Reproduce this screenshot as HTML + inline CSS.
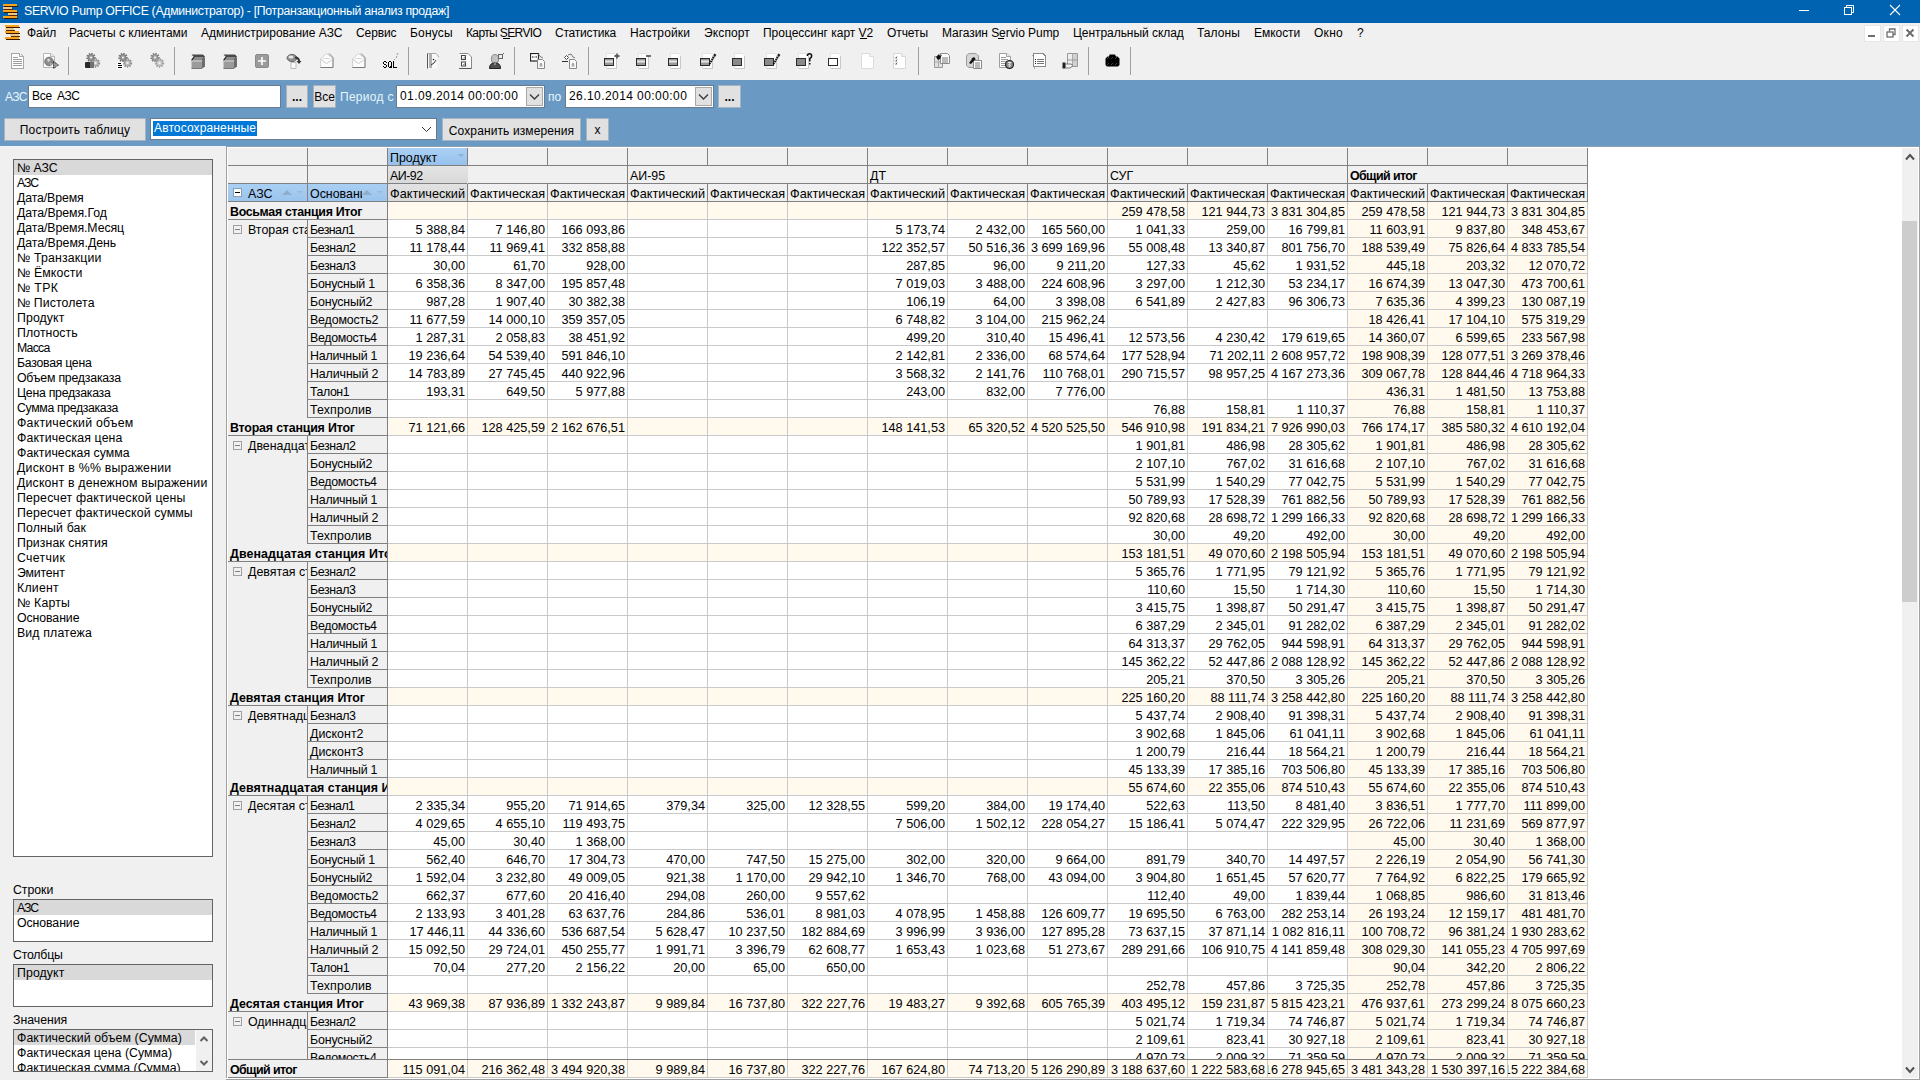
<!DOCTYPE html><html><head><meta charset="utf-8"><style>
*{margin:0;padding:0;box-sizing:border-box}
html,body{width:1920px;height:1080px;overflow:hidden;background:#f0f0f0;font-family:"Liberation Sans",sans-serif;color:#000}
.a{position:absolute}
.t{position:absolute;white-space:nowrap}
#title{left:0;top:0;width:1920px;height:23px;background:#0063b1}
#menu{left:0;top:23px;width:1920px;height:22px;background:#f0f0f0}
.mi{position:absolute;top:26px;font-size:12px;line-height:14px;white-space:nowrap}
#filter{left:0;top:80px;width:1920px;height:66px;background:#6a9ac4}
.btn{position:absolute;background:#e1e1e1;border:1px solid #adadad;font-size:12px;text-align:center;white-space:nowrap;overflow:hidden}
.inp{position:absolute;background:#fff;border:1px solid #7a7a7a;font-size:12px;white-space:nowrap;overflow:hidden}
.sep{position:absolute;top:47px;width:1px;height:28px;background:#a0a0a0}
.c{position:absolute;height:18px;border-right:1px solid #c9c9c9;border-bottom:1px solid #c9c9c9;background:#fff;font-size:12.7px;line-height:17px;padding-top:2px;text-align:right;padding-right:2px;white-space:nowrap;overflow:hidden}
.cr{background:#fff9ee}
.h{position:absolute;height:18px;border-right:1px solid #808080;border-bottom:1px solid #808080;background:#f0f0f0;font-size:12.4px;line-height:17px;padding-top:2px;padding-left:2px;white-space:nowrap;overflow:hidden}
.b{font-weight:bold}
.li{position:absolute;left:17px;font-size:12.3px;line-height:15px;padding-top:1px;white-space:nowrap}
.lb{position:absolute;background:#fff;border:1px solid #646464;overflow:hidden}
.sel{position:absolute;left:1px;right:1px;height:15px;background:#d9d9d9}
</style></head><body>
<div id="title" class="a"></div>
<svg class="a" style="left:3px;top:4px" width="16" height="16" viewBox="0 0 16 16" shape-rendering="crispEdges">
<rect x="1" y="2" width="14" height="1" fill="#3a1800"/><rect x="0" y="0" width="14" height="2" fill="#f8a41a"/>
<rect x="1" y="5" width="9" height="1" fill="#5a2800"/><rect x="0" y="3" width="9" height="2" fill="#e9c690"/>
<rect x="1" y="8" width="14" height="1" fill="#3a1800"/><rect x="0" y="6" width="14" height="2" fill="#f8a41a"/>
<rect x="6" y="11" width="9" height="1" fill="#5a2800"/><rect x="5" y="9" width="9" height="2" fill="#e9c690"/>
<rect x="1" y="14" width="14" height="1" fill="#3a1800"/><rect x="0" y="12" width="14" height="2" fill="#f8a41a"/>
</svg>
<div class="t" style="left:24px;top:4px;font-size:12.3px;line-height:15px;color:#fff;letter-spacing:-0.32px">SERVIO Pump OFFICE (Администратор) - [Потранзакционный анализ продаж]</div>
<div class="a" style="left:1799px;top:10px;width:10px;height:1px;background:#fff"></div>
<svg class="a" style="left:1843px;top:4px" width="12" height="12"><rect x="1.5" y="3.5" width="7" height="7" fill="none" stroke="#fff"/><path d="M3.5 3.5V1.5H10.5V8.5H8.5" fill="none" stroke="#fff"/></svg>
<svg class="a" style="left:1889px;top:4px" width="12" height="12"><path d="M1 1L11 11M11 1L1 11" stroke="#fff" stroke-width="1.1"/></svg>
<div id="menu" class="a"></div>
<svg class="a" style="left:5px;top:25px" width="16" height="16" viewBox="0 0 16 16" shape-rendering="crispEdges">
<rect x="1" y="2" width="14" height="1" fill="#3a1800"/><rect x="0" y="0" width="14" height="2" fill="#f8a41a"/>
<rect x="1" y="5" width="9" height="1" fill="#5a2800"/><rect x="0" y="3" width="9" height="2" fill="#e9c690"/>
<rect x="1" y="8" width="14" height="1" fill="#3a1800"/><rect x="0" y="6" width="14" height="2" fill="#f8a41a"/>
<rect x="6" y="11" width="9" height="1" fill="#5a2800"/><rect x="5" y="9" width="9" height="2" fill="#e9c690"/>
<rect x="1" y="14" width="14" height="1" fill="#3a1800"/><rect x="0" y="12" width="14" height="2" fill="#f8a41a"/>
</svg>
<div class="mi" style="left:27px;letter-spacing:-0.066px">Файл</div>
<div class="mi" style="left:69px;letter-spacing:-0.018px">Расчеты с клиентами</div>
<div class="mi" style="left:201px;letter-spacing:0.004px">Администрирование АЗС</div>
<div class="mi" style="left:356px;letter-spacing:-0.099px">Сервис</div>
<div class="mi" style="left:410px;letter-spacing:0.18px">Бонусы</div>
<div class="mi" style="left:466px;letter-spacing:-0.618px">Карты SERVIO</div>
<div class="mi" style="left:555px;letter-spacing:-0.203px">Статистика</div>
<div class="mi" style="left:630px;letter-spacing:0.128px">Настройки</div>
<div class="mi" style="left:704px;letter-spacing:0.129px">Экспорт</div>
<div class="mi" style="left:763px;letter-spacing:-0.016px">Процессинг карт V2</div>
<div class="mi" style="left:887px;letter-spacing:-0.081px">Отчеты</div>
<div class="mi" style="left:942px;letter-spacing:-0.057px">Магазин Servio Pump</div>
<div class="mi" style="left:1073px;letter-spacing:-0.052px">Центральный склад</div>
<div class="mi" style="left:1197px;letter-spacing:0.078px">Талоны</div>
<div class="mi" style="left:1254px;letter-spacing:-0.038px">Емкости</div>
<div class="mi" style="left:1314px;letter-spacing:0.277px">Окно</div>
<div class="mi" style="left:1357px;letter-spacing:-0.688px">?</div>
<div class="a" style="left:503px;top:38px;width:7px;height:1px;background:#000"></div>
<div class="a" style="left:860px;top:38px;width:7px;height:1px;background:#000"></div>
<div class="a" style="left:998px;top:38px;width:6px;height:1px;background:#000"></div>
<div class="a" style="left:1864px;top:25px;width:17px;height:17px;background:#fff;border:1px solid #e6e6e6"></div>
<div class="a" style="left:1883px;top:25px;width:17px;height:17px;background:#fff;border:1px solid #e6e6e6"></div>
<div class="a" style="left:1902px;top:25px;width:17px;height:17px;background:#fff;border:1px solid #e6e6e6"></div>
<div class="a" style="left:1868px;top:35px;width:7px;height:2px;background:#6d6d6d"></div>
<svg class="a" style="left:1886px;top:28px" width="10" height="10"><rect x="1" y="4" width="6" height="5" fill="none" stroke="#6d6d6d" stroke-width="1.3"/><path d="M3.5 3.5V1H9V6.5H7" fill="none" stroke="#6d6d6d" stroke-width="1.3"/></svg>
<svg class="a" style="left:1905px;top:28px" width="10" height="10"><path d="M1.5 1.5L8.5 8.5M8.5 1.5L1.5 8.5" stroke="#6d6d6d" stroke-width="2"/></svg>
<svg class="a" style="left:11px;top:53px" width="14" height="17" viewBox="0 0 14 17" shape-rendering="crispEdges"><path d="M0.5 0.5H8.5L12.5 3.5V15.5H0.5Z" fill="#fff" stroke="#a8a8a8"/><path d="M8.5 0.5V3.5H12.5" fill="#eee" stroke="#a8a8a8"/><path d="M2 4.5H7M2 6.5H11M2 8.5H11M2 10.5H11M2 12.5H11" stroke="#9c9c9c"/></svg>
<svg class="a" style="left:43px;top:53px" width="17" height="17" viewBox="0 0 17 17"><path d="M0.5 0.5H7.5L11.5 3.5V14.5H0.5Z" fill="#fff" stroke="#b4b4b4"/><path d="M7.5 0.5V3.5H11.5" fill="#eee" stroke="#b4b4b4"/><circle cx="6" cy="8.5" r="4.3" fill="#8a8a8a" stroke="#666" stroke-width="0.8"/><path d="M4 6.2L6.5 5.5L7 7.5L5 9.5Z" fill="#d6d6d6"/><path d="M7.5 10L9 11L7 12Z" fill="#ccc"/><path d="M10.5 8.5L15.5 12L10.5 15.5Z" fill="#9a9a9a" stroke="#111" stroke-width="1" stroke-dasharray="1 0.8"/></svg>
<svg class="a" style="left:84px;top:52px" width="17" height="17" viewBox="0 0 17 17"><circle cx="7" cy="5.5" r="3.6" fill="none" stroke="#6e6e6e" stroke-width="2.2" stroke-dasharray="1.3 1.1"/><circle cx="7" cy="5.5" r="3.0" fill="#9a9a9a" stroke="#6e6e6e" stroke-width="0.8"/><circle cx="7" cy="5.5" r="1" fill="#f4f4f4"/><circle cx="11.5" cy="11" r="3.6" fill="none" stroke="#8c8c8c" stroke-width="2.2" stroke-dasharray="1.3 1.1"/><circle cx="11.5" cy="11" r="3.0" fill="#c4c4c4" stroke="#8c8c8c" stroke-width="0.8"/><circle cx="11.5" cy="11" r="1" fill="#f4f4f4"/><rect x="1" y="10" width="9" height="6" rx="1" fill="#2a2a2a"/><rect x="6" y="10" width="4" height="6" fill="#707070"/></svg>
<svg class="a" style="left:116px;top:52px" width="17" height="17" viewBox="0 0 17 17"><circle cx="7" cy="5.5" r="3.6" fill="none" stroke="#6e6e6e" stroke-width="2.2" stroke-dasharray="1.3 1.1"/><circle cx="7" cy="5.5" r="3.0" fill="#9a9a9a" stroke="#6e6e6e" stroke-width="0.8"/><circle cx="7" cy="5.5" r="1" fill="#f4f4f4"/><circle cx="11.5" cy="11" r="3.6" fill="none" stroke="#8c8c8c" stroke-width="2.2" stroke-dasharray="1.3 1.1"/><circle cx="11.5" cy="11" r="3.0" fill="#c4c4c4" stroke="#8c8c8c" stroke-width="0.8"/><circle cx="11.5" cy="11" r="1" fill="#f4f4f4"/><rect x="1" y="10" width="6" height="7" fill="#fff"/><path d="M2 11.5H5M2 13.5H6M2 15.5H6" stroke="#000" stroke-width="1.2"/></svg>
<svg class="a" style="left:148px;top:52px" width="17" height="17" viewBox="0 0 17 17"><circle cx="7" cy="5.5" r="3.6" fill="none" stroke="#7a7a7a" stroke-width="2.2" stroke-dasharray="1.3 1.1"/><circle cx="7" cy="5.5" r="3.0" fill="#a8a8a8" stroke="#7a7a7a" stroke-width="0.8"/><circle cx="7" cy="5.5" r="1" fill="#f4f4f4"/><circle cx="11.5" cy="11" r="3.6" fill="none" stroke="#9a9a9a" stroke-width="2.2" stroke-dasharray="1.3 1.1"/><circle cx="11.5" cy="11" r="3.0" fill="#d0d0d0" stroke="#9a9a9a" stroke-width="0.8"/><circle cx="11.5" cy="11" r="1" fill="#f4f4f4"/></svg>
<svg class="a" style="left:191px;top:54px" width="14" height="15" viewBox="0 0 14 15"><path d="M0.5 0.5H12L14 2.5L11.5 6.5H0.5L3 3Z" fill="#4a4a4a"/><path d="M3 3H12.5L10.5 6.5H0.8Z" fill="#8c8c8c"/><path d="M3.2 2.8L0.6 6.4" stroke="#1e1e1e" stroke-width="1.1"/><rect x="0.5" y="7" width="10.5" height="7.5" fill="#9a9a9a"/><path d="M11 6.8L14 3V12.8L11 14.5Z" fill="#6c6c6c"/><path d="M0.5 7H11" stroke="#d6d6d6"/><path d="M11 14.5H0.5" stroke="#777"/></svg>
<svg class="a" style="left:223px;top:54px" width="14" height="15" viewBox="0 0 14 15"><path d="M0.5 0.5H12L14 2.5L11.5 6.5H0.5L3 3Z" fill="#4a4a4a"/><path d="M3 3H12.5L10.5 6.5H0.8Z" fill="#8c8c8c"/><path d="M3.2 2.8L0.6 6.4" stroke="#1e1e1e" stroke-width="1.1"/><rect x="0.5" y="7" width="10.5" height="7.5" fill="#9a9a9a"/><path d="M11 6.8L14 3V12.8L11 14.5Z" fill="#6c6c6c"/><path d="M0.5 7H11" stroke="#d6d6d6"/><path d="M11 14.5H0.5" stroke="#777"/></svg>
<svg class="a" style="left:255px;top:54px" width="15" height="15" viewBox="0 0 15 15"><rect x="0.5" y="0.5" width="13" height="13" rx="1.5" fill="#9b9b9b" stroke="#8a8a8a"/><path d="M7 3V11M3 7H11" stroke="#fff" stroke-width="1.6"/></svg>
<svg class="a" style="left:286px;top:53px" width="17" height="17" viewBox="0 0 17 17"><ellipse cx="6" cy="5" rx="5" ry="3.6" fill="#8e8e8e" stroke="#6a6a6a"/><ellipse cx="5" cy="4" rx="2.5" ry="1.6" fill="#e6e6e6"/><path d="M5 9.5H10V15.5H5Z" fill="#fafafa" stroke="#bbb"/><path d="M9 3.5C12 3.5 14 5 14 8L15.5 8L13 11L10.5 8L12 8C12 6.5 11 5.5 9 5.5Z" fill="#333"/></svg>
<svg class="a" style="left:320px;top:53px" width="14" height="16" viewBox="0 0 14 16"><path d="M0.5 14.5V6L6.5 0.5L13 6V14.5Z" fill="#fdfdfd" stroke="#d0d0d0"/><path d="M9 0.5L13 4.5V14.5H0.5" fill="none" stroke="#7a7a7a"/><path d="M0.5 6L6.5 10.5L13 6" fill="none" stroke="#c8c8c8"/><path d="M3 5.5H10" stroke="#d8d8d8"/></svg>
<svg class="a" style="left:352px;top:53px" width="14" height="16" viewBox="0 0 14 16"><path d="M0.5 14.5V6L6.5 0.5L13 6V14.5Z" fill="#fdfdfd" stroke="#d0d0d0"/><path d="M9 0.5L13 4.5V14.5H0.5" fill="none" stroke="#7a7a7a"/><path d="M0.5 6L6.5 10.5L13 6" fill="none" stroke="#c8c8c8"/><path d="M3 5.5H10" stroke="#d8d8d8"/></svg>
<svg class="a" style="left:383px;top:61px" width="15" height="7" viewBox="0 0 15 7" shape-rendering="crispEdges"><rect x="1" y="0" width="1" height="1" fill="#000"/><rect x="2" y="0" width="1" height="1" fill="#000"/><rect x="6" y="0" width="1" height="1" fill="#000"/><rect x="7" y="0" width="1" height="1" fill="#000"/><rect x="10" y="0" width="1" height="1" fill="#000"/><rect x="0" y="1" width="1" height="1" fill="#000"/><rect x="3" y="1" width="1" height="1" fill="#000"/><rect x="5" y="1" width="1" height="1" fill="#000"/><rect x="8" y="1" width="1" height="1" fill="#000"/><rect x="10" y="1" width="1" height="1" fill="#000"/><rect x="0" y="2" width="1" height="1" fill="#000"/><rect x="5" y="2" width="1" height="1" fill="#000"/><rect x="8" y="2" width="1" height="1" fill="#000"/><rect x="10" y="2" width="1" height="1" fill="#000"/><rect x="1" y="3" width="1" height="1" fill="#000"/><rect x="2" y="3" width="1" height="1" fill="#000"/><rect x="5" y="3" width="1" height="1" fill="#000"/><rect x="8" y="3" width="1" height="1" fill="#000"/><rect x="10" y="3" width="1" height="1" fill="#000"/><rect x="3" y="4" width="1" height="1" fill="#000"/><rect x="5" y="4" width="1" height="1" fill="#000"/><rect x="8" y="4" width="1" height="1" fill="#000"/><rect x="10" y="4" width="1" height="1" fill="#000"/><rect x="0" y="5" width="1" height="1" fill="#000"/><rect x="3" y="5" width="1" height="1" fill="#000"/><rect x="5" y="5" width="1" height="1" fill="#000"/><rect x="7" y="5" width="1" height="1" fill="#000"/><rect x="8" y="5" width="1" height="1" fill="#000"/><rect x="10" y="5" width="1" height="1" fill="#000"/><rect x="1" y="6" width="1" height="1" fill="#000"/><rect x="2" y="6" width="1" height="1" fill="#000"/><rect x="6" y="6" width="1" height="1" fill="#000"/><rect x="7" y="6" width="1" height="1" fill="#000"/><rect x="8" y="6" width="1" height="1" fill="#000"/><rect x="10" y="6" width="1" height="1" fill="#000"/><rect x="11" y="6" width="1" height="1" fill="#000"/><rect x="12" y="6" width="1" height="1" fill="#000"/><rect x="13" y="6" width="1" height="1" fill="#000"/></svg>
<svg class="a" style="left:393px;top:52px" width="6" height="9" viewBox="0 0 6 9"><path d="M5 1L4 3M4 4L3 6M2 7L1 8" stroke="#9a9a9a"/></svg>
<svg class="a" style="left:427px;top:53px" width="13" height="17" viewBox="0 0 13 17"><path d="M0.5 0.5V15.5" stroke="#555"/><rect x="1" y="0.5" width="9" height="15" fill="#fafafa"/><rect x="2" y="1" width="3" height="14" fill="#b0b0b0"/><path d="M1 0.5H9L12 4" stroke="#a8a8a8" fill="none"/><path d="M4 12L7 10L9 7" stroke="#333" fill="none"/><circle cx="6.5" cy="6.5" r="0.8" fill="#222"/></svg>
<svg class="a" style="left:459px;top:53px" width="13" height="17" viewBox="0 0 13 17"><path d="M0.5 0.5H9L12.5 4V15.5" fill="#fdfdfd" stroke="#8a8a8a"/><path d="M0 15.5H12.5" stroke="#555"/><rect x="2.5" y="2.5" width="4" height="4" fill="#fff" stroke="#444"/><rect x="2.5" y="9" width="4" height="4" fill="#fff" stroke="#444"/><path d="M4 4.5L5 5.5L7 2M4 11L5 12L7 8.5" stroke="#777" fill="none" stroke-width="0.8"/></svg>
<svg class="a" style="left:489px;top:53px" width="16" height="17" viewBox="0 0 16 17"><ellipse cx="6" cy="6" rx="3.6" ry="4.5" fill="#c2c2c2" stroke="#8a8a8a"/><path d="M0.5 15.5C0.5 11 3 10 6 10C9 10 11.5 11 11.5 15.5Z" fill="#4e4e4e" stroke="#222"/><path d="M5 10.5L6 12L7 10.5Z" fill="#fff"/><rect x="9.5" y="1.5" width="4" height="4" fill="#eee" stroke="#666"/><path d="M13.5 1.5L15 0" stroke="#666"/></svg>
<svg class="a" style="left:530px;top:53px" width="17" height="17" viewBox="0 0 17 17"><rect x="0.5" y="0.5" width="8" height="7.5" fill="#fff" stroke="#222" stroke-width="1.2"/><path d="M2.5 4H6.5M3 3L2 4L3 5M6 3L7 4L6 5" stroke="#555" fill="none" stroke-width="0.7"/><path d="M7.5 6.5H12.5L14.5 8.5V15.5H7.5Z" fill="#fafafa" stroke="#888"/><path d="M9.5 13H12.5M11 10L10 12H12Z" stroke="#999" fill="none"/><path d="M8 1L11 4L13 5" stroke="#777" fill="none"/></svg>
<svg class="a" style="left:562px;top:53px" width="17" height="17" viewBox="0 0 17 17"><path d="M2.5 4.5L4.5 2.5L6.5 4.5L4.5 6.5Z" fill="#fff" stroke="#444"/><path d="M0 8.5H6" stroke="#333"/><path d="M7.5 6.5H12.5L14.5 8.5V15.5H7.5Z" fill="#fafafa" stroke="#888"/><path d="M9.5 13H12.5M11 10L10 12H12Z" stroke="#999" fill="none"/><path d="M6 2L9 1L11 4L13 5" stroke="#777" fill="none"/></svg>
<svg class="a" style="left:604px;top:53px" width="17" height="17" viewBox="0 0 17 17"><path d="M2.5 0.5H10.5L12.5 2.5V15.5H2.5Z" fill="#fff" stroke="#e2e2e2"/><path d="M3 15.5H12.5V3" stroke="#c8c8c8" fill="none"/><rect x="0.5" y="5.5" width="9" height="7" fill="#999" stroke="#2a2a2a"/><path d="M1 8.5H9" stroke="#e6e6e6" stroke-width="2"/><path d="M13 0.5V5.5M10.5 3H15.5" stroke="#5e5e5e" stroke-width="1.8"/></svg>
<svg class="a" style="left:636px;top:53px" width="17" height="17" viewBox="0 0 17 17"><path d="M2.5 0.5H10.5L12.5 2.5V15.5H2.5Z" fill="#fff" stroke="#e2e2e2"/><path d="M3 15.5H12.5V3" stroke="#c8c8c8" fill="none"/><rect x="0.5" y="5.5" width="9" height="7" fill="#999" stroke="#2a2a2a"/><path d="M1 8.5H9" stroke="#e6e6e6" stroke-width="2"/><path d="M10 3H15" stroke="#5e5e5e" stroke-width="1.8"/></svg>
<svg class="a" style="left:668px;top:53px" width="17" height="17" viewBox="0 0 17 17"><path d="M2.5 0.5H10.5L12.5 2.5V15.5H2.5Z" fill="#fff" stroke="#e2e2e2"/><path d="M3 15.5H12.5V3" stroke="#c8c8c8" fill="none"/><rect x="0.5" y="5.5" width="9" height="7" fill="#999" stroke="#2a2a2a"/><path d="M1 8.5H9" stroke="#e6e6e6" stroke-width="2"/></svg>
<svg class="a" style="left:700px;top:53px" width="17" height="17" viewBox="0 0 17 17"><path d="M2.5 0.5H10.5L12.5 2.5V15.5H2.5Z" fill="#fff" stroke="#e2e2e2"/><path d="M3 15.5H12.5V3" stroke="#c8c8c8" fill="none"/><rect x="0.5" y="5.5" width="9" height="7" fill="#999" stroke="#2a2a2a"/><path d="M1 8.5H9" stroke="#e6e6e6" stroke-width="2"/><path d="M9.5 11L15 2" stroke="#111" stroke-width="2" stroke-dasharray="1.5 0.7"/><path d="M14 1L16 2.5" stroke="#111" stroke-width="1.5"/></svg>
<svg class="a" style="left:732px;top:53px" width="17" height="17" viewBox="0 0 17 17"><path d="M2.5 0.5H10.5L12.5 2.5V15.5H2.5Z" fill="#fff" stroke="#e2e2e2"/><path d="M3 15.5H12.5V3" stroke="#c8c8c8" fill="none"/><rect x="0.5" y="5.5" width="9" height="7" fill="#8a8a8a" stroke="#2a2a2a"/></svg>
<svg class="a" style="left:764px;top:53px" width="17" height="17" viewBox="0 0 17 17"><path d="M2.5 0.5H10.5L12.5 2.5V15.5H2.5Z" fill="#fff" stroke="#e2e2e2"/><path d="M3 15.5H12.5V3" stroke="#c8c8c8" fill="none"/><rect x="0.5" y="5.5" width="9" height="7" fill="#8a8a8a" stroke="#2a2a2a"/><path d="M9.5 11L15 2" stroke="#111" stroke-width="2" stroke-dasharray="1.5 0.7"/><path d="M14 1L16 2.5" stroke="#111" stroke-width="1.5"/></svg>
<svg class="a" style="left:796px;top:53px" width="17" height="17" viewBox="0 0 17 17"><path d="M2.5 0.5H10.5L12.5 2.5V15.5H2.5Z" fill="#fff" stroke="#e2e2e2"/><path d="M3 15.5H12.5V3" stroke="#c8c8c8" fill="none"/><rect x="0.5" y="5.5" width="9" height="7" fill="#8a8a8a" stroke="#2a2a2a"/><path d="M11.3 3Q11.3 0.8 13.5 0.8Q15.7 0.8 15.7 3Q15.7 4.3 13.8 5.5V8.5M13.8 10V11.5" stroke="#111" fill="none" stroke-width="1.5"/></svg>
<svg class="a" style="left:828px;top:53px" width="17" height="17" viewBox="0 0 17 17"><path d="M2.5 0.5H10.5L12.5 2.5V15.5H2.5Z" fill="#fff" stroke="#e2e2e2"/><path d="M3 15.5H12.5V3" stroke="#c8c8c8" fill="none"/><rect x="0.5" y="5.5" width="9" height="7" fill="#fff" stroke="#2a2a2a"/></svg>
<svg class="a" style="left:861px;top:53px" width="15" height="17" viewBox="0 0 15 17"><path d="M0.5 0.5H8.5L12.5 3.5V15.5H0.5Z" fill="#fff" stroke="#dcdcdc"/><path d="M8.5 0.5V3.5H12.5" fill="#eee" stroke="#dcdcdc"/></svg>
<svg class="a" style="left:893px;top:53px" width="15" height="17" viewBox="0 0 15 17"><path d="M0.5 0.5H8.5L12.5 3.5V15.5H0.5Z" fill="#fff" stroke="#d8d8d8"/><path d="M8.5 0.5V3.5H12.5" fill="#eee" stroke="#d8d8d8"/><path d="M2 4.5L3 5.5L4 3.5M2 7.5L3 8.5L4 6.5M2 10.5L3 11.5L4 9.5" stroke="#555" fill="none" stroke-width="0.9"/></svg>
<svg class="a" style="left:934px;top:53px" width="17" height="17" viewBox="0 0 17 17"><path d="M0.5 3.5H8.5V14.5H0.5Z" fill="#e0e0e0" stroke="#9a9a9a"/><path d="M0.5 9H8.5M4.5 3.5V14.5" stroke="#aaa"/><path d="M6.5 0.5H13.5L15.5 2.5V10.5H6.5Z" fill="#fff" stroke="#8a8a8a"/><path d="M8 5H14M8 7H14M8 9H14" stroke="#777"/><path d="M2 4L5 1L6 3L8 1.5L6 6L4 7Z" fill="#111"/></svg>
<svg class="a" style="left:966px;top:53px" width="17" height="17" viewBox="0 0 17 17"><path d="M0.5 2.5L3 0.5H10L12.5 3V12.5L10 14.5H3L0.5 12.5Z" fill="#d6d6d6" stroke="#9a9a9a"/><path d="M7.5 7.5H15.5V15.5H7.5Z" fill="#fff" stroke="#8a8a8a"/><path d="M9 10H14M9 12H14M9 14H14" stroke="#777"/><path d="M3 10L6 6H5L8 4L10 6.5H9L5 11Z" fill="#111"/></svg>
<svg class="a" style="left:999px;top:53px" width="17" height="17" viewBox="0 0 17 17"><path d="M0.5 0.5H7.5L11.5 3.5V14.5H0.5Z" fill="#fff" stroke="#a0a0a0"/><path d="M7.5 0.5V3.5H11.5" fill="#eee" stroke="#a0a0a0"/><path d="M2 4.5H7M2 6.5H9M2 8.5H8M2 10.5H7M2 12.5H7" stroke="#9a9a9a"/><circle cx="10.5" cy="11.5" r="4" fill="#8a8a8a" stroke="#222" stroke-width="1.2"/><path d="M9 9.5H12L9.5 12H11.5L10 14" stroke="#eee" fill="none"/></svg>
<svg class="a" style="left:1031px;top:53px" width="17" height="17" viewBox="0 0 17 17" shape-rendering="crispEdges"><path d="M0.5 2.5H3V15.5" fill="none" stroke="#b0b0b0"/><path d="M2.5 0.5H12L14.5 3V13.5H2.5Z" fill="#fff" stroke="#8a8a8a"/><path d="M6 6H13M6 8H13M6 10H13" stroke="#777"/><path d="M4 5.5V6.5M4 7.5V8.5M4 9.5V10.5" stroke="#222"/></svg>
<svg class="a" style="left:1062px;top:53px" width="17" height="17" viewBox="0 0 17 17"><path d="M5.5 0.5H15.5V13.5H5.5Z" fill="#d0d0d0" stroke="#9a9a9a"/><path d="M10.5 0.5V13.5" stroke="#aaa"/><rect x="6" y="1" width="4" height="12" fill="#eee"/><path d="M5.5 7H15.5" stroke="#999"/><rect x="0.5" y="9.5" width="3" height="6" fill="#222"/><path d="M3.5 11H9L11 12.5L8 15H3.5Z" fill="#f4f4f4" stroke="#777"/></svg>
<svg class="a" style="left:1105px;top:54px" width="15" height="13" viewBox="0 0 15 13"><path d="M4.5 0.5H10L11 2.5H12.5L14.5 4.5V11L13 12.5H2L0.5 11V4.5L2.5 2.5H4Z" fill="#000"/><path d="M2.5 4.5L3.5 3.5M6.5 4.5L7.5 3.5M10.5 4.5L11.5 3.5M2.5 10.5L3.5 9.5M6.5 10.5L7.5 9.5M10.5 10.5L11.5 9.5" stroke="#8a8a8a" stroke-width="0.9"/></svg>
<div class="sep" style="left:68px"></div>
<div class="sep" style="left:174px"></div>
<div class="sep" style="left:408px"></div>
<div class="sep" style="left:514px"></div>
<div class="sep" style="left:588px"></div>
<div class="sep" style="left:918px"></div>
<div class="sep" style="left:1088px"></div>
<div class="sep" style="left:1130px"></div>
<div id="filter" class="a"></div>
<div class="t" style="left:5px;top:90px;font-size:12px;line-height:14px;color:#e6f6fc;letter-spacing:-0.6px">АЗС</div>
<div class="inp" style="left:28px;top:85px;width:253px;height:23px;padding:3px 0 0 3px;line-height:14px;letter-spacing:-0.27px;word-spacing:2px;border-color:#687b8e">Все АЗС</div>
<div class="btn" style="left:286px;top:85px;width:22px;height:23px;line-height:22px;font-weight:bold;border-color:#a6b4c2">...</div>
<div class="btn" style="left:313px;top:85px;width:23px;height:23px;line-height:23px;border-color:#a6b4c2">Все</div>
<div class="t" style="left:340px;top:90px;font-size:12px;line-height:14px;color:#e6f6fc;letter-spacing:0.28px">Период с</div>
<div class="inp" style="left:396px;top:85px;width:149px;height:23px;padding:3px 0 0 3px;line-height:14px;letter-spacing:0.43px;border-color:#687b8e">01.09.2014 00:00:00</div>
<div class="a" style="left:526px;top:87px;width:17px;height:19px;background:#e1e1e1;border:1px solid #a8a8a8"></div>
<svg class="a" style="left:529px;top:93px" width="11" height="8"><path d="M1 1.5L5.5 6L10 1.5" stroke="#3a3a3a" fill="none" stroke-width="1.3"/></svg>
<div class="inp" style="left:565px;top:85px;width:149px;height:23px;padding:3px 0 0 3px;line-height:14px;letter-spacing:0.43px;border-color:#687b8e">26.10.2014 00:00:00</div>
<div class="a" style="left:695px;top:87px;width:17px;height:19px;background:#e1e1e1;border:1px solid #a8a8a8"></div>
<svg class="a" style="left:698px;top:93px" width="11" height="8"><path d="M1 1.5L5.5 6L10 1.5" stroke="#3a3a3a" fill="none" stroke-width="1.3"/></svg>
<div class="t" style="left:548px;top:90px;font-size:12px;line-height:14px;color:#e6f6fc">по</div>
<div class="btn" style="left:718px;top:85px;width:23px;height:23px;line-height:22px;font-weight:bold;border-color:#a6b4c2">...</div>
<div class="btn" style="left:4px;top:118px;width:142px;height:23px;line-height:23px;letter-spacing:0.22px;border-color:#a6b4c2">Построить таблицу</div>
<div class="inp" style="left:150px;top:118px;width:287px;height:22px;border-color:#687b8e"></div>
<div class="t" style="left:153px;top:121px;font-size:12px;line-height:15px;color:#fff;background:#0078d7;padding:0 1px;letter-spacing:0.13px">Автосохраненные</div>
<svg class="a" style="left:421px;top:126px" width="11" height="7"><path d="M1 1L5.5 5.5L10 1" stroke="#333" fill="none"/></svg>
<div class="btn" style="left:442px;top:118px;width:139px;height:23px;line-height:24px;letter-spacing:0.11px;border-color:#a6b4c2">Сохранить измерения</div>
<div class="btn" style="left:586px;top:118px;width:23px;height:23px;line-height:22px;border-color:#a6b4c2">x</div>
<div class="a" style="left:0;top:146px;width:226px;height:934px;background:#f0f0f0"></div>
<div class="lb" style="left:13px;top:159px;width:200px;height:698px"></div>
<div class="a" style="left:14px;top:160px;width:198px;height:15px;background:#d9d9d9"></div>
<div class="li" style="top:160px;letter-spacing:-0.025px">№ АЗС</div>
<div class="li" style="top:175px;letter-spacing:-1.1px">АЗС</div>
<div class="li" style="top:190px;letter-spacing:-0.111px">Дата/Время</div>
<div class="li" style="top:205px;letter-spacing:-0.054px">Дата/Время.Год</div>
<div class="li" style="top:220px;letter-spacing:-0.067px">Дата/Время.Месяц</div>
<div class="li" style="top:235px;letter-spacing:-0.014px">Дата/Время.День</div>
<div class="li" style="top:250px;letter-spacing:0.173px">№ Транзакции</div>
<div class="li" style="top:265px;letter-spacing:0.137px">№ Ёмкости</div>
<div class="li" style="top:280px;letter-spacing:0.35px">№ ТРК</div>
<div class="li" style="top:295px;letter-spacing:0.11px">№ Пистолета</div>
<div class="li" style="top:310px;letter-spacing:0.1px">Продукт</div>
<div class="li" style="top:325px;letter-spacing:0.062px">Плотность</div>
<div class="li" style="top:340px;letter-spacing:-0.775px">Масса</div>
<div class="li" style="top:355px;letter-spacing:-0.273px">Базовая цена</div>
<div class="li" style="top:370px;letter-spacing:-0.2px">Объем предзаказа</div>
<div class="li" style="top:385px;letter-spacing:-0.264px">Цена предзаказа</div>
<div class="li" style="top:400px;letter-spacing:-0.353px">Сумма предзаказа</div>
<div class="li" style="top:415px;letter-spacing:0.231px">Фактический объем</div>
<div class="li" style="top:430px;letter-spacing:0.12px">Фактическая цена</div>
<div class="li" style="top:445px;letter-spacing:0.037px">Фактическая сумма</div>
<div class="li" style="top:460px;letter-spacing:0.224px">Дисконт в %% выражении</div>
<div class="li" style="top:475px;letter-spacing:0.181px">Дисконт в денежном выражении</div>
<div class="li" style="top:490px;letter-spacing:0.196px">Пересчет фактической цены</div>
<div class="li" style="top:505px;letter-spacing:0.14px">Пересчет фактической суммы</div>
<div class="li" style="top:520px;letter-spacing:0.167px">Полный бак</div>
<div class="li" style="top:535px;letter-spacing:0.092px">Признак снятия</div>
<div class="li" style="top:550px;letter-spacing:0.333px">Счетчик</div>
<div class="li" style="top:565px;letter-spacing:-0.167px">Эмитент</div>
<div class="li" style="top:580px;letter-spacing:0.24px">Клиент</div>
<div class="li" style="top:595px;letter-spacing:0.217px">№ Карты</div>
<div class="li" style="top:610px;letter-spacing:-0.075px">Основание</div>
<div class="li" style="top:625px;letter-spacing:0.15px">Вид платежа</div>
<div class="t" style="left:13px;top:883px;font-size:12.3px;line-height:15px;letter-spacing:-0.02px">Строки</div>
<div class="lb" style="left:13px;top:899px;width:200px;height:43px"></div>
<div class="a" style="left:14px;top:900px;width:198px;height:15px;background:#d9d9d9"></div>
<div class="li" style="top:900px;letter-spacing:-1.1px">АЗС</div><div class="li" style="top:915px;letter-spacing:-0.075px">Основание</div>
<div class="t" style="left:13px;top:948px;font-size:12.3px;line-height:15px;letter-spacing:-0.2px">Столбцы</div>
<div class="lb" style="left:13px;top:964px;width:200px;height:43px"></div>
<div class="a" style="left:14px;top:965px;width:198px;height:15px;background:#d9d9d9"></div>
<div class="li" style="top:965px;letter-spacing:0.1px">Продукт</div>
<div class="t" style="left:13px;top:1013px;font-size:12.3px;line-height:15px;letter-spacing:-0.014px">Значения</div>
<div class="lb" style="left:13px;top:1029px;width:200px;height:43px"></div>
<div class="a" style="left:14px;top:1030px;width:181px;height:15px;background:#d9d9d9"></div>
<div class="a" style="left:14px;top:1030px;width:181px;height:41px;overflow:hidden"><div class="li" style="left:3px;top:0;letter-spacing:0.083px">Фактический объем (Сумма)</div><div class="li" style="left:3px;top:15px;letter-spacing:0.057px">Фактическая цена (Сумма)</div><div class="li" style="left:3px;top:30px;letter-spacing:0.057px">Фактическая сумма (Сумма)</div></div>
<div class="a" style="left:196px;top:1030px;width:16px;height:41px;background:#f0f0f0"></div>
<svg class="a" style="left:198px;top:1034px" width="12" height="34"><path d="M2.5 7L6 3.5L9.5 7" stroke="#606060" fill="none" stroke-width="2"/><path d="M2.5 27L6 30.5L9.5 27" stroke="#606060" fill="none" stroke-width="2"/></svg>
<div class="a" style="left:226px;top:147px;width:1px;height:933px;background:#a0a0a0"></div>
<div class="a" style="left:227px;top:146px;width:1693px;height:934px;background:#fff"></div>
<div class="a" style="left:226px;top:146px;width:1694px;height:1px;background:#8d9fb2"></div>
<div class="a" style="left:0;top:146px;width:226px;height:1px;background:#eef5fc"></div>
<div class="a" style="left:1902px;top:148px;width:16px;height:930px;background:#f0f0f0"></div>
<div class="a" style="left:1902px;top:221px;width:15px;height:381px;background:#cdcdcd"></div>
<svg class="a" style="left:1904px;top:150px" width="12" height="12"><path d="M2 9.5L6 5L10 9.5" stroke="#505050" fill="none" stroke-width="2"/></svg>
<svg class="a" style="left:1904px;top:1066px" width="12" height="10"><path d="M2 1.5L6 6L10 1.5" stroke="#505050" fill="none" stroke-width="2"/></svg>
<div class="a" style="left:1919px;top:147px;width:1px;height:933px;background:#a0a0a0"></div>
<div class="a" style="left:226px;top:1078px;width:1693px;height:1px;background:#fff"></div>
<div class="a" style="left:226px;top:1079px;width:1694px;height:1px;background:#a0a0a0"></div>
<div class="a" style="left:227px;top:147px;width:1361px;height:912px;overflow:hidden">
<div class="a" style="left:-227px;top:-147px;width:1920px;height:1080px">
<div class="h" style="left:228px;top:148px;width:80px"></div>
<div class="h" style="left:308px;top:148px;width:80px"></div>
<div class="h" style="left:388px;top:148px;width:80px;background:linear-gradient(#aad0f4,#98c2ec)">Продукт</div>
<svg class="a" style="left:458px;top:154px" width="6" height="4"><path d="M0 0H6L3 3Z" fill="#8fb0cf"/></svg>
<div class="h" style="left:468px;top:148px;width:80px;border-bottom-color:#808080"></div>
<div class="h" style="left:548px;top:148px;width:80px;border-bottom-color:#808080"></div>
<div class="h" style="left:628px;top:148px;width:80px;border-bottom-color:#808080"></div>
<div class="h" style="left:708px;top:148px;width:80px;border-bottom-color:#808080"></div>
<div class="h" style="left:788px;top:148px;width:80px;border-bottom-color:#808080"></div>
<div class="h" style="left:868px;top:148px;width:80px;border-bottom-color:#808080"></div>
<div class="h" style="left:948px;top:148px;width:80px;border-bottom-color:#808080"></div>
<div class="h" style="left:1028px;top:148px;width:80px;border-bottom-color:#808080"></div>
<div class="h" style="left:1108px;top:148px;width:80px;border-bottom-color:#808080"></div>
<div class="h" style="left:1188px;top:148px;width:80px;border-bottom-color:#808080"></div>
<div class="h" style="left:1268px;top:148px;width:80px;border-bottom-color:#808080"></div>
<div class="h" style="left:1348px;top:148px;width:80px;border-bottom-color:#808080"></div>
<div class="h" style="left:1428px;top:148px;width:80px;border-bottom-color:#808080"></div>
<div class="h" style="left:1508px;top:148px;width:80px;border-bottom-color:#808080"></div>
<div class="h" style="left:228px;top:166px;width:80px"></div>
<div class="h" style="left:308px;top:166px;width:80px"></div>
<div class="h" style="left:388px;top:166px;width:80px;background:linear-gradient(#e4e4e4,#d9d9d9);border-right-color:transparent;letter-spacing:-0.5px">АИ-92</div>
<div class="h" style="left:468px;top:166px;width:160px"></div>
<div class="h" style="left:628px;top:166px;width:240px">АИ-95</div>
<div class="h" style="left:868px;top:166px;width:240px">ДТ</div>
<div class="h" style="left:1108px;top:166px;width:240px">СУГ</div>
<div class="h b" style="left:1348px;top:166px;width:240px;letter-spacing:-0.59px">Общий итог</div>
<div class="h" style="left:228px;top:184px;width:80px;background:linear-gradient(#a9cff3,#9bc4ee);padding-left:20px">АЗС</div>
<div class="h" style="left:308px;top:184px;width:80px;background:linear-gradient(#a9cff3,#9bc4ee)"><div style="width:52px;overflow:hidden">Основание</div></div>
<svg class="a" style="left:233px;top:188px" width="9" height="9"><rect x="0.5" y="0.5" width="8" height="8" fill="#fff" stroke="#8a9fb5"/><path d="M2 4.5H7" stroke="#000"/></svg>
<svg class="a" style="left:282px;top:189px" width="22" height="7"><path d="M0 6L5 1L10 6Z" fill="#8eaecc"/><path d="M15 2H20L17.5 4.5Z" fill="#9ab8d6"/></svg>
<svg class="a" style="left:362px;top:189px" width="22" height="7"><path d="M0 6L5 1L10 6Z" fill="#8eaecc"/><path d="M15 2H20L17.5 4.5Z" fill="#9ab8d6"/></svg>
<div class="h" style="left:388px;top:184px;width:80px;font-size:12.7px;background:linear-gradient(#e2e2e2,#dadada)">Фактический</div>
<div class="h" style="left:468px;top:184px;width:80px;font-size:12.7px">Фактическая</div>
<div class="h" style="left:548px;top:184px;width:80px;font-size:12.7px">Фактическая</div>
<div class="h" style="left:628px;top:184px;width:80px;font-size:12.7px">Фактический</div>
<div class="h" style="left:708px;top:184px;width:80px;font-size:12.7px">Фактическая</div>
<div class="h" style="left:788px;top:184px;width:80px;font-size:12.7px">Фактическая</div>
<div class="h" style="left:868px;top:184px;width:80px;font-size:12.7px">Фактический</div>
<div class="h" style="left:948px;top:184px;width:80px;font-size:12.7px">Фактическая</div>
<div class="h" style="left:1028px;top:184px;width:80px;font-size:12.7px">Фактическая</div>
<div class="h" style="left:1108px;top:184px;width:80px;font-size:12.7px">Фактический</div>
<div class="h" style="left:1188px;top:184px;width:80px;font-size:12.7px">Фактическая</div>
<div class="h" style="left:1268px;top:184px;width:80px;font-size:12.7px">Фактическая</div>
<div class="h" style="left:1348px;top:184px;width:80px;font-size:12.7px">Фактический</div>
<div class="h" style="left:1428px;top:184px;width:80px;font-size:12.7px">Фактическая</div>
<div class="h" style="left:1508px;top:184px;width:80px;font-size:12.7px">Фактическая</div>
<div class="h b" style="left:228px;top:202px;width:160px;letter-spacing:-0.31px">Восьмая станция Итог</div>
<div class="c cr" style="left:388px;top:202px;width:80px"></div>
<div class="c cr" style="left:468px;top:202px;width:80px"></div>
<div class="c cr" style="left:548px;top:202px;width:80px"></div>
<div class="c cr" style="left:628px;top:202px;width:80px"></div>
<div class="c cr" style="left:708px;top:202px;width:80px"></div>
<div class="c cr" style="left:788px;top:202px;width:80px"></div>
<div class="c cr" style="left:868px;top:202px;width:80px"></div>
<div class="c cr" style="left:948px;top:202px;width:80px"></div>
<div class="c cr" style="left:1028px;top:202px;width:80px"></div>
<div class="c cr" style="left:1108px;top:202px;width:80px">259 478,58</div>
<div class="c cr" style="left:1188px;top:202px;width:80px">121 944,73</div>
<div class="c cr" style="left:1268px;top:202px;width:80px">3 831 304,85</div>
<div class="c cr" style="left:1348px;top:202px;width:80px">259 478,58</div>
<div class="c cr" style="left:1428px;top:202px;width:80px">121 944,73</div>
<div class="c cr" style="left:1508px;top:202px;width:80px">3 831 304,85</div>
<div class="h" style="left:308px;top:220px;width:80px;letter-spacing:-0.55px">Безнал1</div>
<div class="c" style="left:388px;top:220px;width:80px">5 388,84</div>
<div class="c" style="left:468px;top:220px;width:80px">7 146,80</div>
<div class="c" style="left:548px;top:220px;width:80px">166 093,86</div>
<div class="c" style="left:628px;top:220px;width:80px"></div>
<div class="c" style="left:708px;top:220px;width:80px"></div>
<div class="c" style="left:788px;top:220px;width:80px"></div>
<div class="c" style="left:868px;top:220px;width:80px">5 173,74</div>
<div class="c" style="left:948px;top:220px;width:80px">2 432,00</div>
<div class="c" style="left:1028px;top:220px;width:80px">165 560,00</div>
<div class="c" style="left:1108px;top:220px;width:80px">1 041,33</div>
<div class="c" style="left:1188px;top:220px;width:80px">259,00</div>
<div class="c" style="left:1268px;top:220px;width:80px">16 799,81</div>
<div class="c cr" style="left:1348px;top:220px;width:80px">11 603,91</div>
<div class="c cr" style="left:1428px;top:220px;width:80px">9 837,80</div>
<div class="c cr" style="left:1508px;top:220px;width:80px">348 453,67</div>
<div class="h" style="left:308px;top:238px;width:80px;letter-spacing:-0.4px">Безнал2</div>
<div class="c" style="left:388px;top:238px;width:80px">11 178,44</div>
<div class="c" style="left:468px;top:238px;width:80px">11 969,41</div>
<div class="c" style="left:548px;top:238px;width:80px">332 858,88</div>
<div class="c" style="left:628px;top:238px;width:80px"></div>
<div class="c" style="left:708px;top:238px;width:80px"></div>
<div class="c" style="left:788px;top:238px;width:80px"></div>
<div class="c" style="left:868px;top:238px;width:80px">122 352,57</div>
<div class="c" style="left:948px;top:238px;width:80px">50 516,36</div>
<div class="c" style="left:1028px;top:238px;width:80px">3 699 169,96</div>
<div class="c" style="left:1108px;top:238px;width:80px">55 008,48</div>
<div class="c" style="left:1188px;top:238px;width:80px">13 340,87</div>
<div class="c" style="left:1268px;top:238px;width:80px">801 756,70</div>
<div class="c cr" style="left:1348px;top:238px;width:80px">188 539,49</div>
<div class="c cr" style="left:1428px;top:238px;width:80px">75 826,64</div>
<div class="c cr" style="left:1508px;top:238px;width:80px">4 833 785,54</div>
<div class="h" style="left:308px;top:256px;width:80px;letter-spacing:-0.4px">Безнал3</div>
<div class="c" style="left:388px;top:256px;width:80px">30,00</div>
<div class="c" style="left:468px;top:256px;width:80px">61,70</div>
<div class="c" style="left:548px;top:256px;width:80px">928,00</div>
<div class="c" style="left:628px;top:256px;width:80px"></div>
<div class="c" style="left:708px;top:256px;width:80px"></div>
<div class="c" style="left:788px;top:256px;width:80px"></div>
<div class="c" style="left:868px;top:256px;width:80px">287,85</div>
<div class="c" style="left:948px;top:256px;width:80px">96,00</div>
<div class="c" style="left:1028px;top:256px;width:80px">9 211,20</div>
<div class="c" style="left:1108px;top:256px;width:80px">127,33</div>
<div class="c" style="left:1188px;top:256px;width:80px">45,62</div>
<div class="c" style="left:1268px;top:256px;width:80px">1 931,52</div>
<div class="c cr" style="left:1348px;top:256px;width:80px">445,18</div>
<div class="c cr" style="left:1428px;top:256px;width:80px">203,32</div>
<div class="c cr" style="left:1508px;top:256px;width:80px">12 070,72</div>
<div class="h" style="left:308px;top:274px;width:80px;letter-spacing:-0.222px">Бонусный 1</div>
<div class="c" style="left:388px;top:274px;width:80px">6 358,36</div>
<div class="c" style="left:468px;top:274px;width:80px">8 347,00</div>
<div class="c" style="left:548px;top:274px;width:80px">195 857,48</div>
<div class="c" style="left:628px;top:274px;width:80px"></div>
<div class="c" style="left:708px;top:274px;width:80px"></div>
<div class="c" style="left:788px;top:274px;width:80px"></div>
<div class="c" style="left:868px;top:274px;width:80px">7 019,03</div>
<div class="c" style="left:948px;top:274px;width:80px">3 488,00</div>
<div class="c" style="left:1028px;top:274px;width:80px">224 608,96</div>
<div class="c" style="left:1108px;top:274px;width:80px">3 297,00</div>
<div class="c" style="left:1188px;top:274px;width:80px">1 212,30</div>
<div class="c" style="left:1268px;top:274px;width:80px">53 234,17</div>
<div class="c cr" style="left:1348px;top:274px;width:80px">16 674,39</div>
<div class="c cr" style="left:1428px;top:274px;width:80px">13 047,30</div>
<div class="c cr" style="left:1508px;top:274px;width:80px">473 700,61</div>
<div class="h" style="left:308px;top:292px;width:80px;letter-spacing:-0.162px">Бонусный2</div>
<div class="c" style="left:388px;top:292px;width:80px">987,28</div>
<div class="c" style="left:468px;top:292px;width:80px">1 907,40</div>
<div class="c" style="left:548px;top:292px;width:80px">30 382,38</div>
<div class="c" style="left:628px;top:292px;width:80px"></div>
<div class="c" style="left:708px;top:292px;width:80px"></div>
<div class="c" style="left:788px;top:292px;width:80px"></div>
<div class="c" style="left:868px;top:292px;width:80px">106,19</div>
<div class="c" style="left:948px;top:292px;width:80px">64,00</div>
<div class="c" style="left:1028px;top:292px;width:80px">3 398,08</div>
<div class="c" style="left:1108px;top:292px;width:80px">6 541,89</div>
<div class="c" style="left:1188px;top:292px;width:80px">2 427,83</div>
<div class="c" style="left:1268px;top:292px;width:80px">96 306,73</div>
<div class="c cr" style="left:1348px;top:292px;width:80px">7 635,36</div>
<div class="c cr" style="left:1428px;top:292px;width:80px">4 399,23</div>
<div class="c cr" style="left:1508px;top:292px;width:80px">130 087,19</div>
<div class="h" style="left:308px;top:310px;width:80px;letter-spacing:-0.144px">Ведомость2</div>
<div class="c" style="left:388px;top:310px;width:80px">11 677,59</div>
<div class="c" style="left:468px;top:310px;width:80px">14 000,10</div>
<div class="c" style="left:548px;top:310px;width:80px">359 357,05</div>
<div class="c" style="left:628px;top:310px;width:80px"></div>
<div class="c" style="left:708px;top:310px;width:80px"></div>
<div class="c" style="left:788px;top:310px;width:80px"></div>
<div class="c" style="left:868px;top:310px;width:80px">6 748,82</div>
<div class="c" style="left:948px;top:310px;width:80px">3 104,00</div>
<div class="c" style="left:1028px;top:310px;width:80px">215 962,24</div>
<div class="c" style="left:1108px;top:310px;width:80px"></div>
<div class="c" style="left:1188px;top:310px;width:80px"></div>
<div class="c" style="left:1268px;top:310px;width:80px"></div>
<div class="c cr" style="left:1348px;top:310px;width:80px">18 426,41</div>
<div class="c cr" style="left:1428px;top:310px;width:80px">17 104,10</div>
<div class="c cr" style="left:1508px;top:310px;width:80px">575 319,29</div>
<div class="h" style="left:308px;top:328px;width:80px;letter-spacing:-0.3px">Ведомость4</div>
<div class="c" style="left:388px;top:328px;width:80px">1 287,31</div>
<div class="c" style="left:468px;top:328px;width:80px">2 058,83</div>
<div class="c" style="left:548px;top:328px;width:80px">38 451,92</div>
<div class="c" style="left:628px;top:328px;width:80px"></div>
<div class="c" style="left:708px;top:328px;width:80px"></div>
<div class="c" style="left:788px;top:328px;width:80px"></div>
<div class="c" style="left:868px;top:328px;width:80px">499,20</div>
<div class="c" style="left:948px;top:328px;width:80px">310,40</div>
<div class="c" style="left:1028px;top:328px;width:80px">15 496,41</div>
<div class="c" style="left:1108px;top:328px;width:80px">12 573,56</div>
<div class="c" style="left:1188px;top:328px;width:80px">4 230,42</div>
<div class="c" style="left:1268px;top:328px;width:80px">179 619,65</div>
<div class="c cr" style="left:1348px;top:328px;width:80px">14 360,07</div>
<div class="c cr" style="left:1428px;top:328px;width:80px">6 599,65</div>
<div class="c cr" style="left:1508px;top:328px;width:80px">233 567,98</div>
<div class="h" style="left:308px;top:346px;width:80px;letter-spacing:-0.222px">Наличный 1</div>
<div class="c" style="left:388px;top:346px;width:80px">19 236,64</div>
<div class="c" style="left:468px;top:346px;width:80px">54 539,40</div>
<div class="c" style="left:548px;top:346px;width:80px">591 846,10</div>
<div class="c" style="left:628px;top:346px;width:80px"></div>
<div class="c" style="left:708px;top:346px;width:80px"></div>
<div class="c" style="left:788px;top:346px;width:80px"></div>
<div class="c" style="left:868px;top:346px;width:80px">2 142,81</div>
<div class="c" style="left:948px;top:346px;width:80px">2 336,00</div>
<div class="c" style="left:1028px;top:346px;width:80px">68 574,64</div>
<div class="c" style="left:1108px;top:346px;width:80px">177 528,94</div>
<div class="c" style="left:1188px;top:346px;width:80px">71 202,11</div>
<div class="c" style="left:1268px;top:346px;width:80px">2 608 957,72</div>
<div class="c cr" style="left:1348px;top:346px;width:80px">198 908,39</div>
<div class="c cr" style="left:1428px;top:346px;width:80px">128 077,51</div>
<div class="c cr" style="left:1508px;top:346px;width:80px">3 269 378,46</div>
<div class="h" style="left:308px;top:364px;width:80px;letter-spacing:-0.111px">Наличный 2</div>
<div class="c" style="left:388px;top:364px;width:80px">14 783,89</div>
<div class="c" style="left:468px;top:364px;width:80px">27 745,45</div>
<div class="c" style="left:548px;top:364px;width:80px">440 922,96</div>
<div class="c" style="left:628px;top:364px;width:80px"></div>
<div class="c" style="left:708px;top:364px;width:80px"></div>
<div class="c" style="left:788px;top:364px;width:80px"></div>
<div class="c" style="left:868px;top:364px;width:80px">3 568,32</div>
<div class="c" style="left:948px;top:364px;width:80px">2 141,76</div>
<div class="c" style="left:1028px;top:364px;width:80px">110 768,01</div>
<div class="c" style="left:1108px;top:364px;width:80px">290 715,57</div>
<div class="c" style="left:1188px;top:364px;width:80px">98 957,25</div>
<div class="c" style="left:1268px;top:364px;width:80px">4 167 273,36</div>
<div class="c cr" style="left:1348px;top:364px;width:80px">309 067,78</div>
<div class="c cr" style="left:1428px;top:364px;width:80px">128 844,46</div>
<div class="c cr" style="left:1508px;top:364px;width:80px">4 718 964,33</div>
<div class="h" style="left:308px;top:382px;width:80px;letter-spacing:-0.46px">Талон1</div>
<div class="c" style="left:388px;top:382px;width:80px">193,31</div>
<div class="c" style="left:468px;top:382px;width:80px">649,50</div>
<div class="c" style="left:548px;top:382px;width:80px">5 977,88</div>
<div class="c" style="left:628px;top:382px;width:80px"></div>
<div class="c" style="left:708px;top:382px;width:80px"></div>
<div class="c" style="left:788px;top:382px;width:80px"></div>
<div class="c" style="left:868px;top:382px;width:80px">243,00</div>
<div class="c" style="left:948px;top:382px;width:80px">832,00</div>
<div class="c" style="left:1028px;top:382px;width:80px">7 776,00</div>
<div class="c" style="left:1108px;top:382px;width:80px"></div>
<div class="c" style="left:1188px;top:382px;width:80px"></div>
<div class="c" style="left:1268px;top:382px;width:80px"></div>
<div class="c cr" style="left:1348px;top:382px;width:80px">436,31</div>
<div class="c cr" style="left:1428px;top:382px;width:80px">1 481,50</div>
<div class="c cr" style="left:1508px;top:382px;width:80px">13 753,88</div>
<div class="h" style="left:308px;top:400px;width:80px;letter-spacing:0.125px">Техпролив</div>
<div class="c" style="left:388px;top:400px;width:80px"></div>
<div class="c" style="left:468px;top:400px;width:80px"></div>
<div class="c" style="left:548px;top:400px;width:80px"></div>
<div class="c" style="left:628px;top:400px;width:80px"></div>
<div class="c" style="left:708px;top:400px;width:80px"></div>
<div class="c" style="left:788px;top:400px;width:80px"></div>
<div class="c" style="left:868px;top:400px;width:80px"></div>
<div class="c" style="left:948px;top:400px;width:80px"></div>
<div class="c" style="left:1028px;top:400px;width:80px"></div>
<div class="c" style="left:1108px;top:400px;width:80px">76,88</div>
<div class="c" style="left:1188px;top:400px;width:80px">158,81</div>
<div class="c" style="left:1268px;top:400px;width:80px">1 110,37</div>
<div class="c cr" style="left:1348px;top:400px;width:80px">76,88</div>
<div class="c cr" style="left:1428px;top:400px;width:80px">158,81</div>
<div class="c cr" style="left:1508px;top:400px;width:80px">1 110,37</div>
<div class="h b" style="left:228px;top:418px;width:160px;letter-spacing:-0.18px">Вторая станция Итог</div>
<div class="c cr" style="left:388px;top:418px;width:80px">71 121,66</div>
<div class="c cr" style="left:468px;top:418px;width:80px">128 425,59</div>
<div class="c cr" style="left:548px;top:418px;width:80px">2 162 676,51</div>
<div class="c cr" style="left:628px;top:418px;width:80px"></div>
<div class="c cr" style="left:708px;top:418px;width:80px"></div>
<div class="c cr" style="left:788px;top:418px;width:80px"></div>
<div class="c cr" style="left:868px;top:418px;width:80px">148 141,53</div>
<div class="c cr" style="left:948px;top:418px;width:80px">65 320,52</div>
<div class="c cr" style="left:1028px;top:418px;width:80px">4 520 525,50</div>
<div class="c cr" style="left:1108px;top:418px;width:80px">546 910,98</div>
<div class="c cr" style="left:1188px;top:418px;width:80px">191 834,21</div>
<div class="c cr" style="left:1268px;top:418px;width:80px">7 926 990,03</div>
<div class="c cr" style="left:1348px;top:418px;width:80px">766 174,17</div>
<div class="c cr" style="left:1428px;top:418px;width:80px">385 580,32</div>
<div class="c cr" style="left:1508px;top:418px;width:80px">4 610 192,04</div>
<div class="h" style="left:308px;top:436px;width:80px;letter-spacing:-0.4px">Безнал2</div>
<div class="c" style="left:388px;top:436px;width:80px"></div>
<div class="c" style="left:468px;top:436px;width:80px"></div>
<div class="c" style="left:548px;top:436px;width:80px"></div>
<div class="c" style="left:628px;top:436px;width:80px"></div>
<div class="c" style="left:708px;top:436px;width:80px"></div>
<div class="c" style="left:788px;top:436px;width:80px"></div>
<div class="c" style="left:868px;top:436px;width:80px"></div>
<div class="c" style="left:948px;top:436px;width:80px"></div>
<div class="c" style="left:1028px;top:436px;width:80px"></div>
<div class="c" style="left:1108px;top:436px;width:80px">1 901,81</div>
<div class="c" style="left:1188px;top:436px;width:80px">486,98</div>
<div class="c" style="left:1268px;top:436px;width:80px">28 305,62</div>
<div class="c cr" style="left:1348px;top:436px;width:80px">1 901,81</div>
<div class="c cr" style="left:1428px;top:436px;width:80px">486,98</div>
<div class="c cr" style="left:1508px;top:436px;width:80px">28 305,62</div>
<div class="h" style="left:308px;top:454px;width:80px;letter-spacing:-0.162px">Бонусный2</div>
<div class="c" style="left:388px;top:454px;width:80px"></div>
<div class="c" style="left:468px;top:454px;width:80px"></div>
<div class="c" style="left:548px;top:454px;width:80px"></div>
<div class="c" style="left:628px;top:454px;width:80px"></div>
<div class="c" style="left:708px;top:454px;width:80px"></div>
<div class="c" style="left:788px;top:454px;width:80px"></div>
<div class="c" style="left:868px;top:454px;width:80px"></div>
<div class="c" style="left:948px;top:454px;width:80px"></div>
<div class="c" style="left:1028px;top:454px;width:80px"></div>
<div class="c" style="left:1108px;top:454px;width:80px">2 107,10</div>
<div class="c" style="left:1188px;top:454px;width:80px">767,02</div>
<div class="c" style="left:1268px;top:454px;width:80px">31 616,68</div>
<div class="c cr" style="left:1348px;top:454px;width:80px">2 107,10</div>
<div class="c cr" style="left:1428px;top:454px;width:80px">767,02</div>
<div class="c cr" style="left:1508px;top:454px;width:80px">31 616,68</div>
<div class="h" style="left:308px;top:472px;width:80px;letter-spacing:-0.3px">Ведомость4</div>
<div class="c" style="left:388px;top:472px;width:80px"></div>
<div class="c" style="left:468px;top:472px;width:80px"></div>
<div class="c" style="left:548px;top:472px;width:80px"></div>
<div class="c" style="left:628px;top:472px;width:80px"></div>
<div class="c" style="left:708px;top:472px;width:80px"></div>
<div class="c" style="left:788px;top:472px;width:80px"></div>
<div class="c" style="left:868px;top:472px;width:80px"></div>
<div class="c" style="left:948px;top:472px;width:80px"></div>
<div class="c" style="left:1028px;top:472px;width:80px"></div>
<div class="c" style="left:1108px;top:472px;width:80px">5 531,99</div>
<div class="c" style="left:1188px;top:472px;width:80px">1 540,29</div>
<div class="c" style="left:1268px;top:472px;width:80px">77 042,75</div>
<div class="c cr" style="left:1348px;top:472px;width:80px">5 531,99</div>
<div class="c cr" style="left:1428px;top:472px;width:80px">1 540,29</div>
<div class="c cr" style="left:1508px;top:472px;width:80px">77 042,75</div>
<div class="h" style="left:308px;top:490px;width:80px;letter-spacing:-0.222px">Наличный 1</div>
<div class="c" style="left:388px;top:490px;width:80px"></div>
<div class="c" style="left:468px;top:490px;width:80px"></div>
<div class="c" style="left:548px;top:490px;width:80px"></div>
<div class="c" style="left:628px;top:490px;width:80px"></div>
<div class="c" style="left:708px;top:490px;width:80px"></div>
<div class="c" style="left:788px;top:490px;width:80px"></div>
<div class="c" style="left:868px;top:490px;width:80px"></div>
<div class="c" style="left:948px;top:490px;width:80px"></div>
<div class="c" style="left:1028px;top:490px;width:80px"></div>
<div class="c" style="left:1108px;top:490px;width:80px">50 789,93</div>
<div class="c" style="left:1188px;top:490px;width:80px">17 528,39</div>
<div class="c" style="left:1268px;top:490px;width:80px">761 882,56</div>
<div class="c cr" style="left:1348px;top:490px;width:80px">50 789,93</div>
<div class="c cr" style="left:1428px;top:490px;width:80px">17 528,39</div>
<div class="c cr" style="left:1508px;top:490px;width:80px">761 882,56</div>
<div class="h" style="left:308px;top:508px;width:80px;letter-spacing:-0.111px">Наличный 2</div>
<div class="c" style="left:388px;top:508px;width:80px"></div>
<div class="c" style="left:468px;top:508px;width:80px"></div>
<div class="c" style="left:548px;top:508px;width:80px"></div>
<div class="c" style="left:628px;top:508px;width:80px"></div>
<div class="c" style="left:708px;top:508px;width:80px"></div>
<div class="c" style="left:788px;top:508px;width:80px"></div>
<div class="c" style="left:868px;top:508px;width:80px"></div>
<div class="c" style="left:948px;top:508px;width:80px"></div>
<div class="c" style="left:1028px;top:508px;width:80px"></div>
<div class="c" style="left:1108px;top:508px;width:80px">92 820,68</div>
<div class="c" style="left:1188px;top:508px;width:80px">28 698,72</div>
<div class="c" style="left:1268px;top:508px;width:80px">1 299 166,33</div>
<div class="c cr" style="left:1348px;top:508px;width:80px">92 820,68</div>
<div class="c cr" style="left:1428px;top:508px;width:80px">28 698,72</div>
<div class="c cr" style="left:1508px;top:508px;width:80px">1 299 166,33</div>
<div class="h" style="left:308px;top:526px;width:80px;letter-spacing:0.125px">Техпролив</div>
<div class="c" style="left:388px;top:526px;width:80px"></div>
<div class="c" style="left:468px;top:526px;width:80px"></div>
<div class="c" style="left:548px;top:526px;width:80px"></div>
<div class="c" style="left:628px;top:526px;width:80px"></div>
<div class="c" style="left:708px;top:526px;width:80px"></div>
<div class="c" style="left:788px;top:526px;width:80px"></div>
<div class="c" style="left:868px;top:526px;width:80px"></div>
<div class="c" style="left:948px;top:526px;width:80px"></div>
<div class="c" style="left:1028px;top:526px;width:80px"></div>
<div class="c" style="left:1108px;top:526px;width:80px">30,00</div>
<div class="c" style="left:1188px;top:526px;width:80px">49,20</div>
<div class="c" style="left:1268px;top:526px;width:80px">492,00</div>
<div class="c cr" style="left:1348px;top:526px;width:80px">30,00</div>
<div class="c cr" style="left:1428px;top:526px;width:80px">49,20</div>
<div class="c cr" style="left:1508px;top:526px;width:80px">492,00</div>
<div class="h b" style="left:228px;top:544px;width:160px;letter-spacing:0.1px">Двенадцатая станция Итог</div>
<div class="c cr" style="left:388px;top:544px;width:80px"></div>
<div class="c cr" style="left:468px;top:544px;width:80px"></div>
<div class="c cr" style="left:548px;top:544px;width:80px"></div>
<div class="c cr" style="left:628px;top:544px;width:80px"></div>
<div class="c cr" style="left:708px;top:544px;width:80px"></div>
<div class="c cr" style="left:788px;top:544px;width:80px"></div>
<div class="c cr" style="left:868px;top:544px;width:80px"></div>
<div class="c cr" style="left:948px;top:544px;width:80px"></div>
<div class="c cr" style="left:1028px;top:544px;width:80px"></div>
<div class="c cr" style="left:1108px;top:544px;width:80px">153 181,51</div>
<div class="c cr" style="left:1188px;top:544px;width:80px">49 070,60</div>
<div class="c cr" style="left:1268px;top:544px;width:80px">2 198 505,94</div>
<div class="c cr" style="left:1348px;top:544px;width:80px">153 181,51</div>
<div class="c cr" style="left:1428px;top:544px;width:80px">49 070,60</div>
<div class="c cr" style="left:1508px;top:544px;width:80px">2 198 505,94</div>
<div class="h" style="left:308px;top:562px;width:80px;letter-spacing:-0.4px">Безнал2</div>
<div class="c" style="left:388px;top:562px;width:80px"></div>
<div class="c" style="left:468px;top:562px;width:80px"></div>
<div class="c" style="left:548px;top:562px;width:80px"></div>
<div class="c" style="left:628px;top:562px;width:80px"></div>
<div class="c" style="left:708px;top:562px;width:80px"></div>
<div class="c" style="left:788px;top:562px;width:80px"></div>
<div class="c" style="left:868px;top:562px;width:80px"></div>
<div class="c" style="left:948px;top:562px;width:80px"></div>
<div class="c" style="left:1028px;top:562px;width:80px"></div>
<div class="c" style="left:1108px;top:562px;width:80px">5 365,76</div>
<div class="c" style="left:1188px;top:562px;width:80px">1 771,95</div>
<div class="c" style="left:1268px;top:562px;width:80px">79 121,92</div>
<div class="c cr" style="left:1348px;top:562px;width:80px">5 365,76</div>
<div class="c cr" style="left:1428px;top:562px;width:80px">1 771,95</div>
<div class="c cr" style="left:1508px;top:562px;width:80px">79 121,92</div>
<div class="h" style="left:308px;top:580px;width:80px;letter-spacing:-0.4px">Безнал3</div>
<div class="c" style="left:388px;top:580px;width:80px"></div>
<div class="c" style="left:468px;top:580px;width:80px"></div>
<div class="c" style="left:548px;top:580px;width:80px"></div>
<div class="c" style="left:628px;top:580px;width:80px"></div>
<div class="c" style="left:708px;top:580px;width:80px"></div>
<div class="c" style="left:788px;top:580px;width:80px"></div>
<div class="c" style="left:868px;top:580px;width:80px"></div>
<div class="c" style="left:948px;top:580px;width:80px"></div>
<div class="c" style="left:1028px;top:580px;width:80px"></div>
<div class="c" style="left:1108px;top:580px;width:80px">110,60</div>
<div class="c" style="left:1188px;top:580px;width:80px">15,50</div>
<div class="c" style="left:1268px;top:580px;width:80px">1 714,30</div>
<div class="c cr" style="left:1348px;top:580px;width:80px">110,60</div>
<div class="c cr" style="left:1428px;top:580px;width:80px">15,50</div>
<div class="c cr" style="left:1508px;top:580px;width:80px">1 714,30</div>
<div class="h" style="left:308px;top:598px;width:80px;letter-spacing:-0.162px">Бонусный2</div>
<div class="c" style="left:388px;top:598px;width:80px"></div>
<div class="c" style="left:468px;top:598px;width:80px"></div>
<div class="c" style="left:548px;top:598px;width:80px"></div>
<div class="c" style="left:628px;top:598px;width:80px"></div>
<div class="c" style="left:708px;top:598px;width:80px"></div>
<div class="c" style="left:788px;top:598px;width:80px"></div>
<div class="c" style="left:868px;top:598px;width:80px"></div>
<div class="c" style="left:948px;top:598px;width:80px"></div>
<div class="c" style="left:1028px;top:598px;width:80px"></div>
<div class="c" style="left:1108px;top:598px;width:80px">3 415,75</div>
<div class="c" style="left:1188px;top:598px;width:80px">1 398,87</div>
<div class="c" style="left:1268px;top:598px;width:80px">50 291,47</div>
<div class="c cr" style="left:1348px;top:598px;width:80px">3 415,75</div>
<div class="c cr" style="left:1428px;top:598px;width:80px">1 398,87</div>
<div class="c cr" style="left:1508px;top:598px;width:80px">50 291,47</div>
<div class="h" style="left:308px;top:616px;width:80px;letter-spacing:-0.3px">Ведомость4</div>
<div class="c" style="left:388px;top:616px;width:80px"></div>
<div class="c" style="left:468px;top:616px;width:80px"></div>
<div class="c" style="left:548px;top:616px;width:80px"></div>
<div class="c" style="left:628px;top:616px;width:80px"></div>
<div class="c" style="left:708px;top:616px;width:80px"></div>
<div class="c" style="left:788px;top:616px;width:80px"></div>
<div class="c" style="left:868px;top:616px;width:80px"></div>
<div class="c" style="left:948px;top:616px;width:80px"></div>
<div class="c" style="left:1028px;top:616px;width:80px"></div>
<div class="c" style="left:1108px;top:616px;width:80px">6 387,29</div>
<div class="c" style="left:1188px;top:616px;width:80px">2 345,01</div>
<div class="c" style="left:1268px;top:616px;width:80px">91 282,02</div>
<div class="c cr" style="left:1348px;top:616px;width:80px">6 387,29</div>
<div class="c cr" style="left:1428px;top:616px;width:80px">2 345,01</div>
<div class="c cr" style="left:1508px;top:616px;width:80px">91 282,02</div>
<div class="h" style="left:308px;top:634px;width:80px;letter-spacing:-0.222px">Наличный 1</div>
<div class="c" style="left:388px;top:634px;width:80px"></div>
<div class="c" style="left:468px;top:634px;width:80px"></div>
<div class="c" style="left:548px;top:634px;width:80px"></div>
<div class="c" style="left:628px;top:634px;width:80px"></div>
<div class="c" style="left:708px;top:634px;width:80px"></div>
<div class="c" style="left:788px;top:634px;width:80px"></div>
<div class="c" style="left:868px;top:634px;width:80px"></div>
<div class="c" style="left:948px;top:634px;width:80px"></div>
<div class="c" style="left:1028px;top:634px;width:80px"></div>
<div class="c" style="left:1108px;top:634px;width:80px">64 313,37</div>
<div class="c" style="left:1188px;top:634px;width:80px">29 762,05</div>
<div class="c" style="left:1268px;top:634px;width:80px">944 598,91</div>
<div class="c cr" style="left:1348px;top:634px;width:80px">64 313,37</div>
<div class="c cr" style="left:1428px;top:634px;width:80px">29 762,05</div>
<div class="c cr" style="left:1508px;top:634px;width:80px">944 598,91</div>
<div class="h" style="left:308px;top:652px;width:80px;letter-spacing:-0.111px">Наличный 2</div>
<div class="c" style="left:388px;top:652px;width:80px"></div>
<div class="c" style="left:468px;top:652px;width:80px"></div>
<div class="c" style="left:548px;top:652px;width:80px"></div>
<div class="c" style="left:628px;top:652px;width:80px"></div>
<div class="c" style="left:708px;top:652px;width:80px"></div>
<div class="c" style="left:788px;top:652px;width:80px"></div>
<div class="c" style="left:868px;top:652px;width:80px"></div>
<div class="c" style="left:948px;top:652px;width:80px"></div>
<div class="c" style="left:1028px;top:652px;width:80px"></div>
<div class="c" style="left:1108px;top:652px;width:80px">145 362,22</div>
<div class="c" style="left:1188px;top:652px;width:80px">52 447,86</div>
<div class="c" style="left:1268px;top:652px;width:80px">2 088 128,92</div>
<div class="c cr" style="left:1348px;top:652px;width:80px">145 362,22</div>
<div class="c cr" style="left:1428px;top:652px;width:80px">52 447,86</div>
<div class="c cr" style="left:1508px;top:652px;width:80px">2 088 128,92</div>
<div class="h" style="left:308px;top:670px;width:80px;letter-spacing:0.125px">Техпролив</div>
<div class="c" style="left:388px;top:670px;width:80px"></div>
<div class="c" style="left:468px;top:670px;width:80px"></div>
<div class="c" style="left:548px;top:670px;width:80px"></div>
<div class="c" style="left:628px;top:670px;width:80px"></div>
<div class="c" style="left:708px;top:670px;width:80px"></div>
<div class="c" style="left:788px;top:670px;width:80px"></div>
<div class="c" style="left:868px;top:670px;width:80px"></div>
<div class="c" style="left:948px;top:670px;width:80px"></div>
<div class="c" style="left:1028px;top:670px;width:80px"></div>
<div class="c" style="left:1108px;top:670px;width:80px">205,21</div>
<div class="c" style="left:1188px;top:670px;width:80px">370,50</div>
<div class="c" style="left:1268px;top:670px;width:80px">3 305,26</div>
<div class="c cr" style="left:1348px;top:670px;width:80px">205,21</div>
<div class="c cr" style="left:1428px;top:670px;width:80px">370,50</div>
<div class="c cr" style="left:1508px;top:670px;width:80px">3 305,26</div>
<div class="h b" style="left:228px;top:688px;width:160px;letter-spacing:0px">Девятая станция Итог</div>
<div class="c cr" style="left:388px;top:688px;width:80px"></div>
<div class="c cr" style="left:468px;top:688px;width:80px"></div>
<div class="c cr" style="left:548px;top:688px;width:80px"></div>
<div class="c cr" style="left:628px;top:688px;width:80px"></div>
<div class="c cr" style="left:708px;top:688px;width:80px"></div>
<div class="c cr" style="left:788px;top:688px;width:80px"></div>
<div class="c cr" style="left:868px;top:688px;width:80px"></div>
<div class="c cr" style="left:948px;top:688px;width:80px"></div>
<div class="c cr" style="left:1028px;top:688px;width:80px"></div>
<div class="c cr" style="left:1108px;top:688px;width:80px">225 160,20</div>
<div class="c cr" style="left:1188px;top:688px;width:80px">88 111,74</div>
<div class="c cr" style="left:1268px;top:688px;width:80px">3 258 442,80</div>
<div class="c cr" style="left:1348px;top:688px;width:80px">225 160,20</div>
<div class="c cr" style="left:1428px;top:688px;width:80px">88 111,74</div>
<div class="c cr" style="left:1508px;top:688px;width:80px">3 258 442,80</div>
<div class="h" style="left:308px;top:706px;width:80px;letter-spacing:-0.4px">Безнал3</div>
<div class="c" style="left:388px;top:706px;width:80px"></div>
<div class="c" style="left:468px;top:706px;width:80px"></div>
<div class="c" style="left:548px;top:706px;width:80px"></div>
<div class="c" style="left:628px;top:706px;width:80px"></div>
<div class="c" style="left:708px;top:706px;width:80px"></div>
<div class="c" style="left:788px;top:706px;width:80px"></div>
<div class="c" style="left:868px;top:706px;width:80px"></div>
<div class="c" style="left:948px;top:706px;width:80px"></div>
<div class="c" style="left:1028px;top:706px;width:80px"></div>
<div class="c" style="left:1108px;top:706px;width:80px">5 437,74</div>
<div class="c" style="left:1188px;top:706px;width:80px">2 908,40</div>
<div class="c" style="left:1268px;top:706px;width:80px">91 398,31</div>
<div class="c cr" style="left:1348px;top:706px;width:80px">5 437,74</div>
<div class="c cr" style="left:1428px;top:706px;width:80px">2 908,40</div>
<div class="c cr" style="left:1508px;top:706px;width:80px">91 398,31</div>
<div class="h" style="left:308px;top:724px;width:80px;letter-spacing:0.014px">Дисконт2</div>
<div class="c" style="left:388px;top:724px;width:80px"></div>
<div class="c" style="left:468px;top:724px;width:80px"></div>
<div class="c" style="left:548px;top:724px;width:80px"></div>
<div class="c" style="left:628px;top:724px;width:80px"></div>
<div class="c" style="left:708px;top:724px;width:80px"></div>
<div class="c" style="left:788px;top:724px;width:80px"></div>
<div class="c" style="left:868px;top:724px;width:80px"></div>
<div class="c" style="left:948px;top:724px;width:80px"></div>
<div class="c" style="left:1028px;top:724px;width:80px"></div>
<div class="c" style="left:1108px;top:724px;width:80px">3 902,68</div>
<div class="c" style="left:1188px;top:724px;width:80px">1 845,06</div>
<div class="c" style="left:1268px;top:724px;width:80px">61 041,11</div>
<div class="c cr" style="left:1348px;top:724px;width:80px">3 902,68</div>
<div class="c cr" style="left:1428px;top:724px;width:80px">1 845,06</div>
<div class="c cr" style="left:1508px;top:724px;width:80px">61 041,11</div>
<div class="h" style="left:308px;top:742px;width:80px;letter-spacing:0.014px">Дисконт3</div>
<div class="c" style="left:388px;top:742px;width:80px"></div>
<div class="c" style="left:468px;top:742px;width:80px"></div>
<div class="c" style="left:548px;top:742px;width:80px"></div>
<div class="c" style="left:628px;top:742px;width:80px"></div>
<div class="c" style="left:708px;top:742px;width:80px"></div>
<div class="c" style="left:788px;top:742px;width:80px"></div>
<div class="c" style="left:868px;top:742px;width:80px"></div>
<div class="c" style="left:948px;top:742px;width:80px"></div>
<div class="c" style="left:1028px;top:742px;width:80px"></div>
<div class="c" style="left:1108px;top:742px;width:80px">1 200,79</div>
<div class="c" style="left:1188px;top:742px;width:80px">216,44</div>
<div class="c" style="left:1268px;top:742px;width:80px">18 564,21</div>
<div class="c cr" style="left:1348px;top:742px;width:80px">1 200,79</div>
<div class="c cr" style="left:1428px;top:742px;width:80px">216,44</div>
<div class="c cr" style="left:1508px;top:742px;width:80px">18 564,21</div>
<div class="h" style="left:308px;top:760px;width:80px;letter-spacing:-0.222px">Наличный 1</div>
<div class="c" style="left:388px;top:760px;width:80px"></div>
<div class="c" style="left:468px;top:760px;width:80px"></div>
<div class="c" style="left:548px;top:760px;width:80px"></div>
<div class="c" style="left:628px;top:760px;width:80px"></div>
<div class="c" style="left:708px;top:760px;width:80px"></div>
<div class="c" style="left:788px;top:760px;width:80px"></div>
<div class="c" style="left:868px;top:760px;width:80px"></div>
<div class="c" style="left:948px;top:760px;width:80px"></div>
<div class="c" style="left:1028px;top:760px;width:80px"></div>
<div class="c" style="left:1108px;top:760px;width:80px">45 133,39</div>
<div class="c" style="left:1188px;top:760px;width:80px">17 385,16</div>
<div class="c" style="left:1268px;top:760px;width:80px">703 506,80</div>
<div class="c cr" style="left:1348px;top:760px;width:80px">45 133,39</div>
<div class="c cr" style="left:1428px;top:760px;width:80px">17 385,16</div>
<div class="c cr" style="left:1508px;top:760px;width:80px">703 506,80</div>
<div class="h b" style="left:228px;top:778px;width:160px;letter-spacing:0.05px">Девятнадцатая станция Итог</div>
<div class="c cr" style="left:388px;top:778px;width:80px"></div>
<div class="c cr" style="left:468px;top:778px;width:80px"></div>
<div class="c cr" style="left:548px;top:778px;width:80px"></div>
<div class="c cr" style="left:628px;top:778px;width:80px"></div>
<div class="c cr" style="left:708px;top:778px;width:80px"></div>
<div class="c cr" style="left:788px;top:778px;width:80px"></div>
<div class="c cr" style="left:868px;top:778px;width:80px"></div>
<div class="c cr" style="left:948px;top:778px;width:80px"></div>
<div class="c cr" style="left:1028px;top:778px;width:80px"></div>
<div class="c cr" style="left:1108px;top:778px;width:80px">55 674,60</div>
<div class="c cr" style="left:1188px;top:778px;width:80px">22 355,06</div>
<div class="c cr" style="left:1268px;top:778px;width:80px">874 510,43</div>
<div class="c cr" style="left:1348px;top:778px;width:80px">55 674,60</div>
<div class="c cr" style="left:1428px;top:778px;width:80px">22 355,06</div>
<div class="c cr" style="left:1508px;top:778px;width:80px">874 510,43</div>
<div class="h" style="left:308px;top:796px;width:80px;letter-spacing:-0.55px">Безнал1</div>
<div class="c" style="left:388px;top:796px;width:80px">2 335,34</div>
<div class="c" style="left:468px;top:796px;width:80px">955,20</div>
<div class="c" style="left:548px;top:796px;width:80px">71 914,65</div>
<div class="c" style="left:628px;top:796px;width:80px">379,34</div>
<div class="c" style="left:708px;top:796px;width:80px">325,00</div>
<div class="c" style="left:788px;top:796px;width:80px">12 328,55</div>
<div class="c" style="left:868px;top:796px;width:80px">599,20</div>
<div class="c" style="left:948px;top:796px;width:80px">384,00</div>
<div class="c" style="left:1028px;top:796px;width:80px">19 174,40</div>
<div class="c" style="left:1108px;top:796px;width:80px">522,63</div>
<div class="c" style="left:1188px;top:796px;width:80px">113,50</div>
<div class="c" style="left:1268px;top:796px;width:80px">8 481,40</div>
<div class="c cr" style="left:1348px;top:796px;width:80px">3 836,51</div>
<div class="c cr" style="left:1428px;top:796px;width:80px">1 777,70</div>
<div class="c cr" style="left:1508px;top:796px;width:80px">111 899,00</div>
<div class="h" style="left:308px;top:814px;width:80px;letter-spacing:-0.4px">Безнал2</div>
<div class="c" style="left:388px;top:814px;width:80px">4 029,65</div>
<div class="c" style="left:468px;top:814px;width:80px">4 655,10</div>
<div class="c" style="left:548px;top:814px;width:80px">119 493,75</div>
<div class="c" style="left:628px;top:814px;width:80px"></div>
<div class="c" style="left:708px;top:814px;width:80px"></div>
<div class="c" style="left:788px;top:814px;width:80px"></div>
<div class="c" style="left:868px;top:814px;width:80px">7 506,00</div>
<div class="c" style="left:948px;top:814px;width:80px">1 502,12</div>
<div class="c" style="left:1028px;top:814px;width:80px">228 054,27</div>
<div class="c" style="left:1108px;top:814px;width:80px">15 186,41</div>
<div class="c" style="left:1188px;top:814px;width:80px">5 074,47</div>
<div class="c" style="left:1268px;top:814px;width:80px">222 329,95</div>
<div class="c cr" style="left:1348px;top:814px;width:80px">26 722,06</div>
<div class="c cr" style="left:1428px;top:814px;width:80px">11 231,69</div>
<div class="c cr" style="left:1508px;top:814px;width:80px">569 877,97</div>
<div class="h" style="left:308px;top:832px;width:80px;letter-spacing:-0.4px">Безнал3</div>
<div class="c" style="left:388px;top:832px;width:80px">45,00</div>
<div class="c" style="left:468px;top:832px;width:80px">30,40</div>
<div class="c" style="left:548px;top:832px;width:80px">1 368,00</div>
<div class="c" style="left:628px;top:832px;width:80px"></div>
<div class="c" style="left:708px;top:832px;width:80px"></div>
<div class="c" style="left:788px;top:832px;width:80px"></div>
<div class="c" style="left:868px;top:832px;width:80px"></div>
<div class="c" style="left:948px;top:832px;width:80px"></div>
<div class="c" style="left:1028px;top:832px;width:80px"></div>
<div class="c" style="left:1108px;top:832px;width:80px"></div>
<div class="c" style="left:1188px;top:832px;width:80px"></div>
<div class="c" style="left:1268px;top:832px;width:80px"></div>
<div class="c cr" style="left:1348px;top:832px;width:80px">45,00</div>
<div class="c cr" style="left:1428px;top:832px;width:80px">30,40</div>
<div class="c cr" style="left:1508px;top:832px;width:80px">1 368,00</div>
<div class="h" style="left:308px;top:850px;width:80px;letter-spacing:-0.222px">Бонусный 1</div>
<div class="c" style="left:388px;top:850px;width:80px">562,40</div>
<div class="c" style="left:468px;top:850px;width:80px">646,70</div>
<div class="c" style="left:548px;top:850px;width:80px">17 304,73</div>
<div class="c" style="left:628px;top:850px;width:80px">470,00</div>
<div class="c" style="left:708px;top:850px;width:80px">747,50</div>
<div class="c" style="left:788px;top:850px;width:80px">15 275,00</div>
<div class="c" style="left:868px;top:850px;width:80px">302,00</div>
<div class="c" style="left:948px;top:850px;width:80px">320,00</div>
<div class="c" style="left:1028px;top:850px;width:80px">9 664,00</div>
<div class="c" style="left:1108px;top:850px;width:80px">891,79</div>
<div class="c" style="left:1188px;top:850px;width:80px">340,70</div>
<div class="c" style="left:1268px;top:850px;width:80px">14 497,57</div>
<div class="c cr" style="left:1348px;top:850px;width:80px">2 226,19</div>
<div class="c cr" style="left:1428px;top:850px;width:80px">2 054,90</div>
<div class="c cr" style="left:1508px;top:850px;width:80px">56 741,30</div>
<div class="h" style="left:308px;top:868px;width:80px;letter-spacing:-0.162px">Бонусный2</div>
<div class="c" style="left:388px;top:868px;width:80px">1 592,04</div>
<div class="c" style="left:468px;top:868px;width:80px">3 232,80</div>
<div class="c" style="left:548px;top:868px;width:80px">49 009,05</div>
<div class="c" style="left:628px;top:868px;width:80px">921,38</div>
<div class="c" style="left:708px;top:868px;width:80px">1 170,00</div>
<div class="c" style="left:788px;top:868px;width:80px">29 942,10</div>
<div class="c" style="left:868px;top:868px;width:80px">1 346,70</div>
<div class="c" style="left:948px;top:868px;width:80px">768,00</div>
<div class="c" style="left:1028px;top:868px;width:80px">43 094,00</div>
<div class="c" style="left:1108px;top:868px;width:80px">3 904,80</div>
<div class="c" style="left:1188px;top:868px;width:80px">1 651,45</div>
<div class="c" style="left:1268px;top:868px;width:80px">57 620,77</div>
<div class="c cr" style="left:1348px;top:868px;width:80px">7 764,92</div>
<div class="c cr" style="left:1428px;top:868px;width:80px">6 822,25</div>
<div class="c cr" style="left:1508px;top:868px;width:80px">179 665,92</div>
<div class="h" style="left:308px;top:886px;width:80px;letter-spacing:-0.144px">Ведомость2</div>
<div class="c" style="left:388px;top:886px;width:80px">662,37</div>
<div class="c" style="left:468px;top:886px;width:80px">677,60</div>
<div class="c" style="left:548px;top:886px;width:80px">20 416,40</div>
<div class="c" style="left:628px;top:886px;width:80px">294,08</div>
<div class="c" style="left:708px;top:886px;width:80px">260,00</div>
<div class="c" style="left:788px;top:886px;width:80px">9 557,62</div>
<div class="c" style="left:868px;top:886px;width:80px"></div>
<div class="c" style="left:948px;top:886px;width:80px"></div>
<div class="c" style="left:1028px;top:886px;width:80px"></div>
<div class="c" style="left:1108px;top:886px;width:80px">112,40</div>
<div class="c" style="left:1188px;top:886px;width:80px">49,00</div>
<div class="c" style="left:1268px;top:886px;width:80px">1 839,44</div>
<div class="c cr" style="left:1348px;top:886px;width:80px">1 068,85</div>
<div class="c cr" style="left:1428px;top:886px;width:80px">986,60</div>
<div class="c cr" style="left:1508px;top:886px;width:80px">31 813,46</div>
<div class="h" style="left:308px;top:904px;width:80px;letter-spacing:-0.3px">Ведомость4</div>
<div class="c" style="left:388px;top:904px;width:80px">2 133,93</div>
<div class="c" style="left:468px;top:904px;width:80px">3 401,28</div>
<div class="c" style="left:548px;top:904px;width:80px">63 637,76</div>
<div class="c" style="left:628px;top:904px;width:80px">284,86</div>
<div class="c" style="left:708px;top:904px;width:80px">536,01</div>
<div class="c" style="left:788px;top:904px;width:80px">8 981,03</div>
<div class="c" style="left:868px;top:904px;width:80px">4 078,95</div>
<div class="c" style="left:948px;top:904px;width:80px">1 458,88</div>
<div class="c" style="left:1028px;top:904px;width:80px">126 609,77</div>
<div class="c" style="left:1108px;top:904px;width:80px">19 695,50</div>
<div class="c" style="left:1188px;top:904px;width:80px">6 763,00</div>
<div class="c" style="left:1268px;top:904px;width:80px">282 253,14</div>
<div class="c cr" style="left:1348px;top:904px;width:80px">26 193,24</div>
<div class="c cr" style="left:1428px;top:904px;width:80px">12 159,17</div>
<div class="c cr" style="left:1508px;top:904px;width:80px">481 481,70</div>
<div class="h" style="left:308px;top:922px;width:80px;letter-spacing:-0.222px">Наличный 1</div>
<div class="c" style="left:388px;top:922px;width:80px">17 446,11</div>
<div class="c" style="left:468px;top:922px;width:80px">44 336,60</div>
<div class="c" style="left:548px;top:922px;width:80px">536 687,54</div>
<div class="c" style="left:628px;top:922px;width:80px">5 628,47</div>
<div class="c" style="left:708px;top:922px;width:80px">10 237,50</div>
<div class="c" style="left:788px;top:922px;width:80px">182 884,69</div>
<div class="c" style="left:868px;top:922px;width:80px">3 996,99</div>
<div class="c" style="left:948px;top:922px;width:80px">3 936,00</div>
<div class="c" style="left:1028px;top:922px;width:80px">127 895,28</div>
<div class="c" style="left:1108px;top:922px;width:80px">73 637,15</div>
<div class="c" style="left:1188px;top:922px;width:80px">37 871,14</div>
<div class="c" style="left:1268px;top:922px;width:80px">1 082 816,11</div>
<div class="c cr" style="left:1348px;top:922px;width:80px">100 708,72</div>
<div class="c cr" style="left:1428px;top:922px;width:80px">96 381,24</div>
<div class="c cr" style="left:1508px;top:922px;width:80px">1 930 283,62</div>
<div class="h" style="left:308px;top:940px;width:80px;letter-spacing:-0.111px">Наличный 2</div>
<div class="c" style="left:388px;top:940px;width:80px">15 092,50</div>
<div class="c" style="left:468px;top:940px;width:80px">29 724,01</div>
<div class="c" style="left:548px;top:940px;width:80px">450 255,77</div>
<div class="c" style="left:628px;top:940px;width:80px">1 991,71</div>
<div class="c" style="left:708px;top:940px;width:80px">3 396,79</div>
<div class="c" style="left:788px;top:940px;width:80px">62 608,77</div>
<div class="c" style="left:868px;top:940px;width:80px">1 653,43</div>
<div class="c" style="left:948px;top:940px;width:80px">1 023,68</div>
<div class="c" style="left:1028px;top:940px;width:80px">51 273,67</div>
<div class="c" style="left:1108px;top:940px;width:80px">289 291,66</div>
<div class="c" style="left:1188px;top:940px;width:80px">106 910,75</div>
<div class="c" style="left:1268px;top:940px;width:80px">4 141 859,48</div>
<div class="c cr" style="left:1348px;top:940px;width:80px">308 029,30</div>
<div class="c cr" style="left:1428px;top:940px;width:80px">141 055,23</div>
<div class="c cr" style="left:1508px;top:940px;width:80px">4 705 997,69</div>
<div class="h" style="left:308px;top:958px;width:80px;letter-spacing:-0.46px">Талон1</div>
<div class="c" style="left:388px;top:958px;width:80px">70,04</div>
<div class="c" style="left:468px;top:958px;width:80px">277,20</div>
<div class="c" style="left:548px;top:958px;width:80px">2 156,22</div>
<div class="c" style="left:628px;top:958px;width:80px">20,00</div>
<div class="c" style="left:708px;top:958px;width:80px">65,00</div>
<div class="c" style="left:788px;top:958px;width:80px">650,00</div>
<div class="c" style="left:868px;top:958px;width:80px"></div>
<div class="c" style="left:948px;top:958px;width:80px"></div>
<div class="c" style="left:1028px;top:958px;width:80px"></div>
<div class="c" style="left:1108px;top:958px;width:80px"></div>
<div class="c" style="left:1188px;top:958px;width:80px"></div>
<div class="c" style="left:1268px;top:958px;width:80px"></div>
<div class="c cr" style="left:1348px;top:958px;width:80px">90,04</div>
<div class="c cr" style="left:1428px;top:958px;width:80px">342,20</div>
<div class="c cr" style="left:1508px;top:958px;width:80px">2 806,22</div>
<div class="h" style="left:308px;top:976px;width:80px;letter-spacing:0.125px">Техпролив</div>
<div class="c" style="left:388px;top:976px;width:80px"></div>
<div class="c" style="left:468px;top:976px;width:80px"></div>
<div class="c" style="left:548px;top:976px;width:80px"></div>
<div class="c" style="left:628px;top:976px;width:80px"></div>
<div class="c" style="left:708px;top:976px;width:80px"></div>
<div class="c" style="left:788px;top:976px;width:80px"></div>
<div class="c" style="left:868px;top:976px;width:80px"></div>
<div class="c" style="left:948px;top:976px;width:80px"></div>
<div class="c" style="left:1028px;top:976px;width:80px"></div>
<div class="c" style="left:1108px;top:976px;width:80px">252,78</div>
<div class="c" style="left:1188px;top:976px;width:80px">457,86</div>
<div class="c" style="left:1268px;top:976px;width:80px">3 725,35</div>
<div class="c cr" style="left:1348px;top:976px;width:80px">252,78</div>
<div class="c cr" style="left:1428px;top:976px;width:80px">457,86</div>
<div class="c cr" style="left:1508px;top:976px;width:80px">3 725,35</div>
<div class="h b" style="left:228px;top:994px;width:160px;letter-spacing:-0.02px">Десятая станция Итог</div>
<div class="c cr" style="left:388px;top:994px;width:80px">43 969,38</div>
<div class="c cr" style="left:468px;top:994px;width:80px">87 936,89</div>
<div class="c cr" style="left:548px;top:994px;width:80px">1 332 243,87</div>
<div class="c cr" style="left:628px;top:994px;width:80px">9 989,84</div>
<div class="c cr" style="left:708px;top:994px;width:80px">16 737,80</div>
<div class="c cr" style="left:788px;top:994px;width:80px">322 227,76</div>
<div class="c cr" style="left:868px;top:994px;width:80px">19 483,27</div>
<div class="c cr" style="left:948px;top:994px;width:80px">9 392,68</div>
<div class="c cr" style="left:1028px;top:994px;width:80px">605 765,39</div>
<div class="c cr" style="left:1108px;top:994px;width:80px">403 495,12</div>
<div class="c cr" style="left:1188px;top:994px;width:80px">159 231,87</div>
<div class="c cr" style="left:1268px;top:994px;width:80px">5 815 423,21</div>
<div class="c cr" style="left:1348px;top:994px;width:80px">476 937,61</div>
<div class="c cr" style="left:1428px;top:994px;width:80px">273 299,24</div>
<div class="c cr" style="left:1508px;top:994px;width:80px">8 075 660,23</div>
<div class="h" style="left:308px;top:1012px;width:80px;letter-spacing:-0.4px">Безнал2</div>
<div class="c" style="left:388px;top:1012px;width:80px"></div>
<div class="c" style="left:468px;top:1012px;width:80px"></div>
<div class="c" style="left:548px;top:1012px;width:80px"></div>
<div class="c" style="left:628px;top:1012px;width:80px"></div>
<div class="c" style="left:708px;top:1012px;width:80px"></div>
<div class="c" style="left:788px;top:1012px;width:80px"></div>
<div class="c" style="left:868px;top:1012px;width:80px"></div>
<div class="c" style="left:948px;top:1012px;width:80px"></div>
<div class="c" style="left:1028px;top:1012px;width:80px"></div>
<div class="c" style="left:1108px;top:1012px;width:80px">5 021,74</div>
<div class="c" style="left:1188px;top:1012px;width:80px">1 719,34</div>
<div class="c" style="left:1268px;top:1012px;width:80px">74 746,87</div>
<div class="c cr" style="left:1348px;top:1012px;width:80px">5 021,74</div>
<div class="c cr" style="left:1428px;top:1012px;width:80px">1 719,34</div>
<div class="c cr" style="left:1508px;top:1012px;width:80px">74 746,87</div>
<div class="h" style="left:308px;top:1030px;width:80px;letter-spacing:-0.162px">Бонусный2</div>
<div class="c" style="left:388px;top:1030px;width:80px"></div>
<div class="c" style="left:468px;top:1030px;width:80px"></div>
<div class="c" style="left:548px;top:1030px;width:80px"></div>
<div class="c" style="left:628px;top:1030px;width:80px"></div>
<div class="c" style="left:708px;top:1030px;width:80px"></div>
<div class="c" style="left:788px;top:1030px;width:80px"></div>
<div class="c" style="left:868px;top:1030px;width:80px"></div>
<div class="c" style="left:948px;top:1030px;width:80px"></div>
<div class="c" style="left:1028px;top:1030px;width:80px"></div>
<div class="c" style="left:1108px;top:1030px;width:80px">2 109,61</div>
<div class="c" style="left:1188px;top:1030px;width:80px">823,41</div>
<div class="c" style="left:1268px;top:1030px;width:80px">30 927,18</div>
<div class="c cr" style="left:1348px;top:1030px;width:80px">2 109,61</div>
<div class="c cr" style="left:1428px;top:1030px;width:80px">823,41</div>
<div class="c cr" style="left:1508px;top:1030px;width:80px">30 927,18</div>
<div class="h" style="left:308px;top:1048px;width:80px;letter-spacing:-0.3px">Ведомость4</div>
<div class="c" style="left:388px;top:1048px;width:80px"></div>
<div class="c" style="left:468px;top:1048px;width:80px"></div>
<div class="c" style="left:548px;top:1048px;width:80px"></div>
<div class="c" style="left:628px;top:1048px;width:80px"></div>
<div class="c" style="left:708px;top:1048px;width:80px"></div>
<div class="c" style="left:788px;top:1048px;width:80px"></div>
<div class="c" style="left:868px;top:1048px;width:80px"></div>
<div class="c" style="left:948px;top:1048px;width:80px"></div>
<div class="c" style="left:1028px;top:1048px;width:80px"></div>
<div class="c" style="left:1108px;top:1048px;width:80px">4 970,73</div>
<div class="c" style="left:1188px;top:1048px;width:80px">2 009,32</div>
<div class="c" style="left:1268px;top:1048px;width:80px">71 359,59</div>
<div class="c cr" style="left:1348px;top:1048px;width:80px">4 970,73</div>
<div class="c cr" style="left:1428px;top:1048px;width:80px">2 009,32</div>
<div class="c cr" style="left:1508px;top:1048px;width:80px">71 359,59</div>
<div class="h" style="left:228px;top:220px;width:80px;height:198px;padding-left:20px;border-bottom:0">Вторая станция</div>
<svg class="a" style="left:233px;top:225px" width="9" height="9"><rect x="0.5" y="0.5" width="8" height="8" fill="none" stroke="#a0a0a0"/><path d="M2 4.5H7" stroke="#808080"/></svg>
<div class="h" style="left:228px;top:436px;width:80px;height:108px;padding-left:20px;border-bottom:0">Двенадцатая станция</div>
<svg class="a" style="left:233px;top:441px" width="9" height="9"><rect x="0.5" y="0.5" width="8" height="8" fill="none" stroke="#a0a0a0"/><path d="M2 4.5H7" stroke="#808080"/></svg>
<div class="h" style="left:228px;top:562px;width:80px;height:126px;padding-left:20px;border-bottom:0">Девятая станция</div>
<svg class="a" style="left:233px;top:567px" width="9" height="9"><rect x="0.5" y="0.5" width="8" height="8" fill="none" stroke="#a0a0a0"/><path d="M2 4.5H7" stroke="#808080"/></svg>
<div class="h" style="left:228px;top:706px;width:80px;height:72px;padding-left:20px;border-bottom:0">Девятнадцатая станция</div>
<svg class="a" style="left:233px;top:711px" width="9" height="9"><rect x="0.5" y="0.5" width="8" height="8" fill="none" stroke="#a0a0a0"/><path d="M2 4.5H7" stroke="#808080"/></svg>
<div class="h" style="left:228px;top:796px;width:80px;height:198px;padding-left:20px;border-bottom:0">Десятая станция</div>
<svg class="a" style="left:233px;top:801px" width="9" height="9"><rect x="0.5" y="0.5" width="8" height="8" fill="none" stroke="#a0a0a0"/><path d="M2 4.5H7" stroke="#808080"/></svg>
<div class="h" style="left:228px;top:1012px;width:80px;height:54px;padding-left:20px;border-bottom:0">Одиннадцатая станция</div>
<svg class="a" style="left:233px;top:1017px" width="9" height="9"><rect x="0.5" y="0.5" width="8" height="8" fill="none" stroke="#a0a0a0"/><path d="M2 4.5H7" stroke="#808080"/></svg>
</div></div>
<div class="a" style="left:228px;top:1059px;width:1360px;height:1px;background:#808080"></div>
<div class="h b" style="left:228px;top:1060px;width:160px;letter-spacing:-0.59px">Общий итог</div>
<div class="c cr" style="left:388px;top:1060px;width:80px;display:flex;justify-content:flex-end"><span style="flex-shrink:0">115 091,04</span></div>
<div class="c cr" style="left:468px;top:1060px;width:80px;display:flex;justify-content:flex-end"><span style="flex-shrink:0">216 362,48</span></div>
<div class="c cr" style="left:548px;top:1060px;width:80px;display:flex;justify-content:flex-end"><span style="flex-shrink:0">3 494 920,38</span></div>
<div class="c cr" style="left:628px;top:1060px;width:80px;display:flex;justify-content:flex-end"><span style="flex-shrink:0">9 989,84</span></div>
<div class="c cr" style="left:708px;top:1060px;width:80px;display:flex;justify-content:flex-end"><span style="flex-shrink:0">16 737,80</span></div>
<div class="c cr" style="left:788px;top:1060px;width:80px;display:flex;justify-content:flex-end"><span style="flex-shrink:0">322 227,76</span></div>
<div class="c cr" style="left:868px;top:1060px;width:80px;display:flex;justify-content:flex-end"><span style="flex-shrink:0">167 624,80</span></div>
<div class="c cr" style="left:948px;top:1060px;width:80px;display:flex;justify-content:flex-end"><span style="flex-shrink:0">74 713,20</span></div>
<div class="c cr" style="left:1028px;top:1060px;width:80px;display:flex;justify-content:flex-end"><span style="flex-shrink:0">5 126 290,89</span></div>
<div class="c cr" style="left:1108px;top:1060px;width:80px;display:flex;justify-content:flex-end"><span style="flex-shrink:0">3 188 637,60</span></div>
<div class="c cr" style="left:1188px;top:1060px;width:80px;display:flex;justify-content:flex-end"><span style="flex-shrink:0">1 222 583,68</span></div>
<div class="c cr" style="left:1268px;top:1060px;width:80px;display:flex;justify-content:flex-end"><span style="flex-shrink:0">16 278 945,65</span></div>
<div class="c cr" style="left:1348px;top:1060px;width:80px;display:flex;justify-content:flex-end"><span style="flex-shrink:0">3 481 343,28</span></div>
<div class="c cr" style="left:1428px;top:1060px;width:80px;display:flex;justify-content:flex-end"><span style="flex-shrink:0">1 530 397,16</span></div>
<div class="c cr" style="left:1508px;top:1060px;width:80px;display:flex;justify-content:flex-end"><span style="flex-shrink:0">15 222 384,68</span></div>
</body></html>
